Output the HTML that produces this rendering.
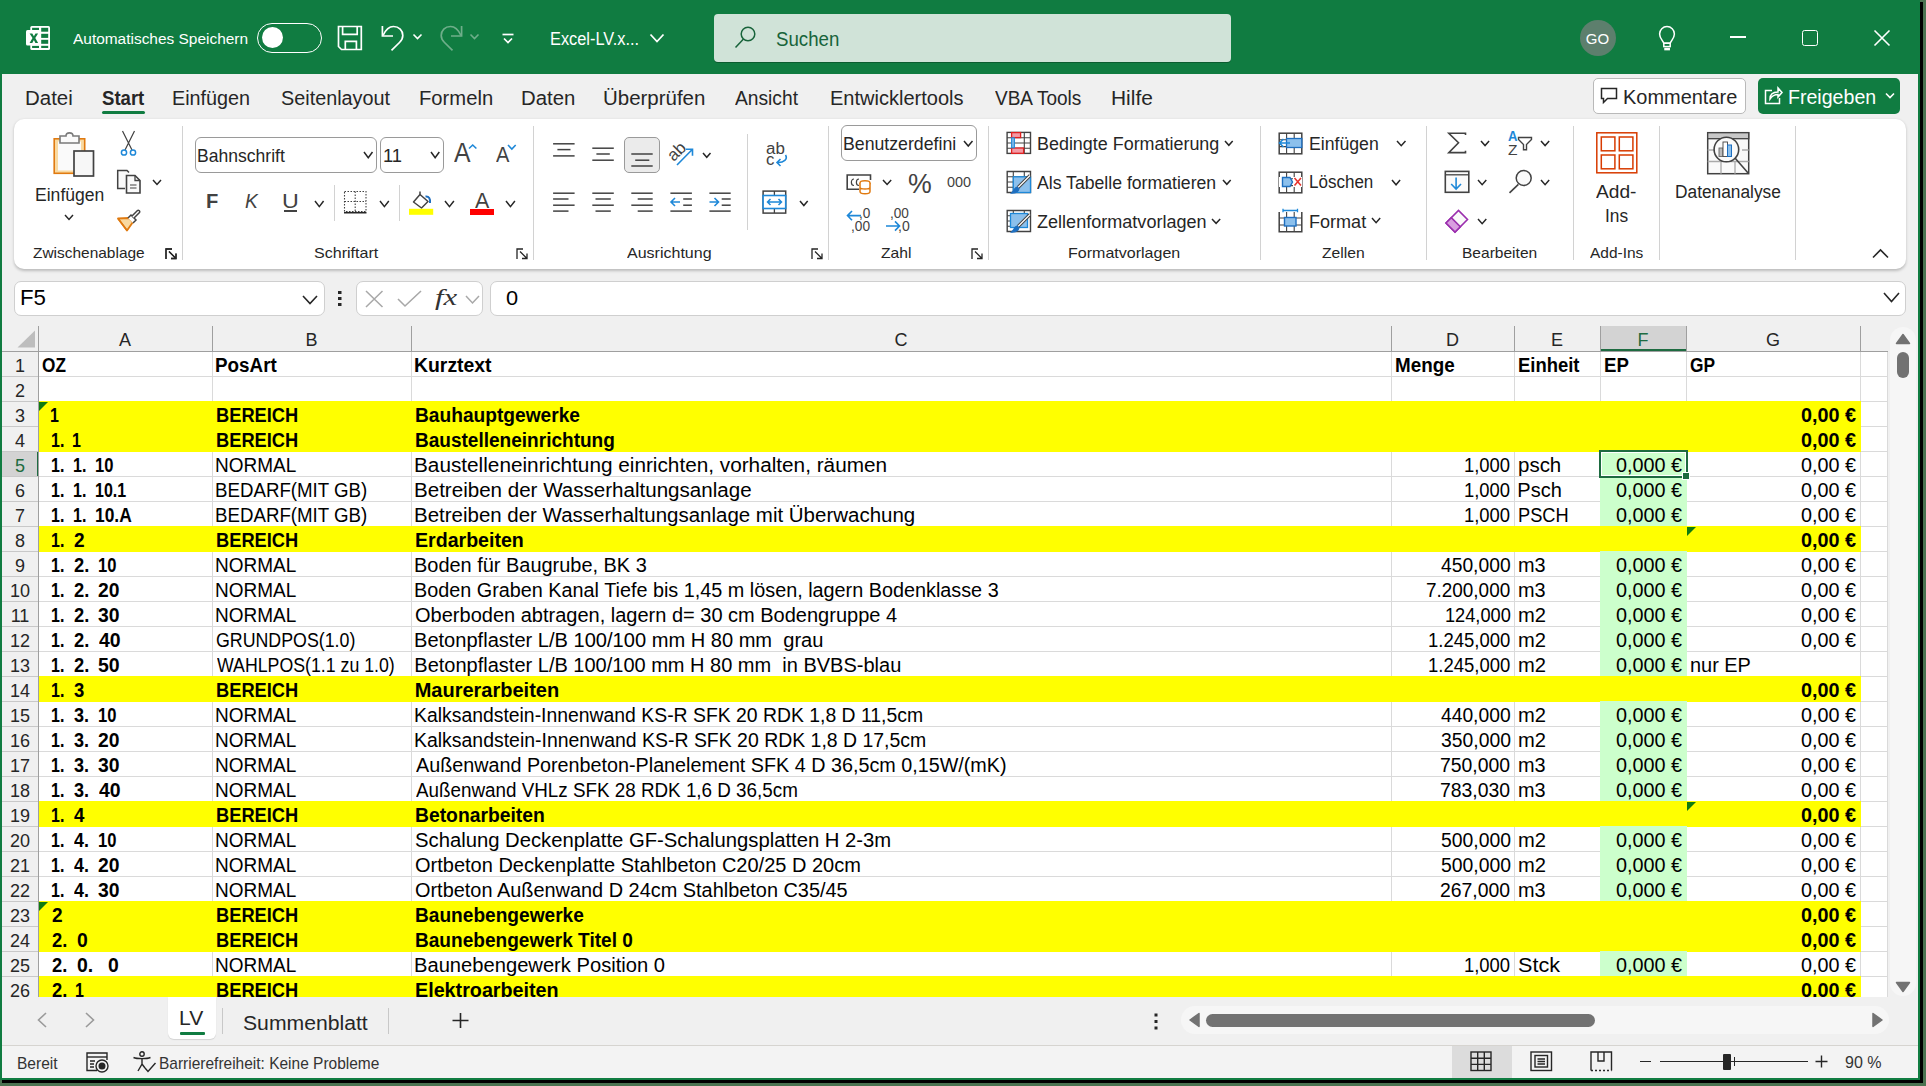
<!DOCTYPE html><html><head><meta charset="utf-8"><title>Excel</title><style>
*{margin:0;padding:0;box-sizing:border-box}
html,body{width:1926px;height:1086px;overflow:hidden;background:#4b7351;font-family:"Liberation Sans",sans-serif}
#w{position:absolute;left:0;top:0;width:1926px;height:1086px;overflow:hidden}
#w span{position:absolute;white-space:pre;transform-origin:0 0}
.r{position:absolute}
svg.r{overflow:visible}
</style></head><body><div id="w">
<div class="r" style="left:2px;top:2px;width:1921px;height:1081px;background:#000"></div>
<div class="r" style="left:0;top:0;width:1920px;height:1080px;background:#107c41"></div>
<div class="r" style="left:2px;top:74px;width:1916px;height:1004px;background:#f0f0f0"></div>
<svg class="r" style="left:20px;top:20px" width="36" height="36" viewBox="0 0 36 36">
<rect x="10.3" y="6" width="19.7" height="24" rx="1.5" fill="#fff"/>
<g fill="#107c41"><rect x="12.1" y="7.8" width="6.9" height="2.2"/><rect x="21.2" y="7.8" width="7" height="3.9"/><rect x="21.2" y="13.8" width="7" height="4.1"/><rect x="21.2" y="19.8" width="7" height="4"/><rect x="21.2" y="25.8" width="7" height="2.2"/><rect x="12.1" y="25.8" width="6.9" height="2.2"/></g>
<rect x="6" y="10.1" width="13.9" height="15.4" rx="1.5" fill="#fff"/>
<path d="M9.6 13.4 H12.3 L13.9 16.3 L15.5 13.4 H18.1 L15.3 17.9 L18.1 22.9 H15.4 L13.9 19.9 L12.3 22.9 H9.6 L12.5 17.9 Z" fill="#107c41"/>
</svg>
<span style="left:73.26px;top:31.00px;font-size:15.5px;line-height:15.5px;font-weight:normal;font-style:normal;color:#ffffff;font-family:'Liberation Sans', sans-serif;transform:scaleX(0.9959);">Automatisches Speichern</span>
<div class="r" style="left:257px;top:23px;width:65px;height:30px;border:1.5px solid #fff;border-radius:15px"></div>
<div class="r" style="left:262px;top:27px;width:21px;height:21px;background:#fff;border-radius:50%"></div>
<svg class="r" style="left:336px;top:24px" width="28" height="28" viewBox="0 0 28 28" fill="none" stroke="#fff" stroke-width="1.7">
<path d="M2.5 2.5 H25.3 V25.5 H5.5 L2.5 22.5 Z"/><path d="M6.6 2.5 V10.3 H21.2 V2.5"/><path d="M9.3 25.5 V17.3 H20.4 V25.5"/></svg>
<svg class="r" style="left:380px;top:24px" width="26" height="28" viewBox="0 0 26 28" fill="none" stroke="#fff" stroke-width="1.7">
<path d="M2.4 2 V12 H13"/><path d="M3 11.5 C6 5 9.5 2.5 13.5 2.5 C19 2.5 22.8 6.5 22.8 11.5 C22.8 14.5 21.5 16.5 19.5 18.5 L11.5 26.3"/></svg>
<svg class="r" style="left:412px;top:33px" width="11" height="8" viewBox="0 0 11 8" fill="none" stroke="#fff" stroke-width="1.6"><path d="M1.5 1.5 L5.5 5.5 L9.5 1.5"/></svg>
<svg class="r" style="left:437.5px;top:24px" width="26" height="28" viewBox="0 0 26 28" fill="none" stroke="#6fae8a" stroke-width="1.7">
<path d="M23.6 2 V12 H13"/><path d="M23 11.5 C20 5 16.5 2.5 12.5 2.5 C7 2.5 3.2 6.5 3.2 11.5 C3.2 14.5 4.5 16.5 6.5 18.5 L14.5 26.3"/></svg>
<svg class="r" style="left:469px;top:33px" width="11" height="8" viewBox="0 0 11 8" fill="none" stroke="#6fae8a" stroke-width="1.6"><path d="M1.5 1.5 L5.5 5.5 L9.5 1.5"/></svg>
<svg class="r" style="left:501px;top:32px" width="14" height="13" viewBox="0 0 14 13" fill="none" stroke="#fff" stroke-width="1.7"><path d="M1.5 2.5 H12.5"/><path d="M3 6.5 L7 10.5 L11 6.5"/></svg>
<span style="left:550.35px;top:30.00px;font-size:18px;line-height:18px;font-weight:normal;font-style:normal;color:#ffffff;font-family:'Liberation Sans', sans-serif;transform:scaleX(0.9089);">Excel-LV.x...</span>
<svg class="r" style="left:649px;top:33px" width="16" height="11" viewBox="0 0 16 11" fill="none" stroke="#fff" stroke-width="1.8"><path d="M1.5 1.5 L8 8.5 L14.5 1.5"/></svg>
<div class="r" style="left:714px;top:14px;width:517px;height:48px;background:#d0e3d8;border-radius:4px;box-shadow:0 1px 0 #0b5c2f"></div>
<svg class="r" style="left:733px;top:24px" width="24" height="26" viewBox="0 0 24 26" fill="none" stroke="#17633a" stroke-width="1.5"><circle cx="15" cy="10" r="6.8"/><path d="M10.5 15 L2.5 23.5"/></svg>
<span style="left:775.96px;top:30.00px;font-size:19.5px;line-height:19.5px;font-weight:normal;font-style:normal;color:#17633a;font-family:'Liberation Sans', sans-serif;transform:scaleX(0.9577);">Suchen</span>
<div class="r" style="left:1580px;top:20px;width:36px;height:36px;border-radius:50%;background:#5d7f6d"></div>
<span style="left:1585.85px;top:31.00px;font-size:15px;line-height:15px;font-weight:normal;font-style:normal;color:#ffffff;font-family:'Liberation Sans', sans-serif;">GO</span>
<svg class="r" style="left:1657px;top:25px" width="20" height="27" viewBox="0 0 20 27" fill="none" stroke="#fff" stroke-width="1.5">
<path d="M6.8 18.2 C5.5 15 2.6 13 2.6 8.9 A7.4 7.4 0 0 1 17.4 8.9 C17.4 13 14.5 15 13.2 18.2 Z"/><rect x="6.8" y="18.2" width="6.4" height="3.4"/><rect x="8" y="23.6" width="4.2" height="1" fill="#fff"/></svg>
<div class="r" style="left:1730px;top:36px;width:16px;height:1.6px;background:#fff"></div>
<div class="r" style="left:1802px;top:30px;width:16px;height:16px;border:1.6px solid #fff;border-radius:2.5px"></div>
<svg class="r" style="left:1873px;top:29px" width="18" height="18" viewBox="0 0 18 18" fill="none" stroke="#fff" stroke-width="1.6"><path d="M1.5 1.5 L16.5 16.5 M16.5 1.5 L1.5 16.5"/></svg>
<span style="left:24.81px;top:89.00px;font-size:19.5px;line-height:19.5px;font-weight:normal;font-style:normal;color:#262626;font-family:'Liberation Sans', sans-serif;transform:scaleX(1.0491);">Datei</span>
<span style="left:101.94px;top:89.00px;font-size:19.5px;line-height:19.5px;font-weight:bold;font-style:normal;color:#262626;font-family:'Liberation Sans', sans-serif;transform:scaleX(0.9522);">Start</span>
<span style="left:172.17px;top:89.00px;font-size:19.5px;line-height:19.5px;font-weight:normal;font-style:normal;color:#262626;font-family:'Liberation Sans', sans-serif;transform:scaleX(1.0142);">Einfügen</span>
<span style="left:280.81px;top:89.00px;font-size:19.5px;line-height:19.5px;font-weight:normal;font-style:normal;color:#262626;font-family:'Liberation Sans', sans-serif;transform:scaleX(1.0158);">Seitenlayout</span>
<span style="left:418.93px;top:89.00px;font-size:19.5px;line-height:19.5px;font-weight:normal;font-style:normal;color:#262626;font-family:'Liberation Sans', sans-serif;transform:scaleX(1.0366);">Formeln</span>
<span style="left:521.02px;top:89.00px;font-size:19.5px;line-height:19.5px;font-weight:normal;font-style:normal;color:#262626;font-family:'Liberation Sans', sans-serif;transform:scaleX(1.0429);">Daten</span>
<span style="left:602.91px;top:89.00px;font-size:19.5px;line-height:19.5px;font-weight:normal;font-style:normal;color:#262626;font-family:'Liberation Sans', sans-serif;transform:scaleX(1.0494);">Überprüfen</span>
<span style="left:735.25px;top:89.00px;font-size:19.5px;line-height:19.5px;font-weight:normal;font-style:normal;color:#262626;font-family:'Liberation Sans', sans-serif;transform:scaleX(0.9849);">Ansicht</span>
<span style="left:829.95px;top:89.00px;font-size:19.5px;line-height:19.5px;font-weight:normal;font-style:normal;color:#262626;font-family:'Liberation Sans', sans-serif;transform:scaleX(1.0268);">Entwicklertools</span>
<span style="left:995.40px;top:89.00px;font-size:19.5px;line-height:19.5px;font-weight:normal;font-style:normal;color:#262626;font-family:'Liberation Sans', sans-serif;transform:scaleX(0.9744);">VBA Tools</span>
<span style="left:1110.88px;top:89.00px;font-size:19.5px;line-height:19.5px;font-weight:normal;font-style:normal;color:#262626;font-family:'Liberation Sans', sans-serif;transform:scaleX(1.0721);">Hilfe</span>
<div class="r" style="left:102px;top:111px;width:43px;height:3px;border-radius:1.5px;background:#107c41"></div>
<div class="r" style="left:1593px;top:78px;width:153px;height:36px;background:#fff;border:1px solid #b9b9b9;border-radius:5px"></div>
<svg class="r" style="left:1600px;top:87px" width="19" height="18" viewBox="0 0 19 18" fill="none" stroke="#262626" stroke-width="1.5"><path d="M1.5 1.5 H16.5 V11.5 H7.5 L3.5 15.5 V11.5 H1.5 Z"/></svg>
<span style="left:1623.15px;top:88.00px;font-size:19.5px;line-height:19.5px;font-weight:normal;font-style:normal;color:#262626;font-family:'Liberation Sans', sans-serif;transform:scaleX(1.0234);">Kommentare</span>
<div class="r" style="left:1758px;top:78px;width:142px;height:36px;background:#107c41;border-radius:5px"></div>
<svg class="r" style="left:1764px;top:86px" width="19" height="19" viewBox="0 0 19 19" fill="none" stroke="#fff" stroke-width="1.5"><path d="M8 4.5 H1.5 V17.5 H15.5 V12"/><path d="M6 13 C6 8 9.5 6 14 6 V2 L18 6.5 L14 11 V8.5 C10.5 8.5 8 10 6 13 Z"/></svg>
<span style="left:1788.39px;top:88.00px;font-size:19.5px;line-height:19.5px;font-weight:normal;font-style:normal;color:#ffffff;font-family:'Liberation Sans', sans-serif;transform:scaleX(1.0039);">Freigeben</span>
<svg class="r" style="left:1885px;top:92px" width="10" height="8" viewBox="0 0 10 8" fill="none" stroke="#fff" stroke-width="1.6"><path d="M1 1.5 L5 5.5 L9 1.5"/></svg>
<div class="r" style="left:14px;top:281px;width:311px;height:35px;background:#fff;border:1px solid #cfcfcf;border-radius:7px"></div>
<span style="left:20.16px;top:286.00px;font-size:22.8px;line-height:22.8px;font-weight:normal;font-style:normal;color:#000;font-family:'Liberation Sans', sans-serif;transform:scaleX(0.9761);">F5</span>
<svg class="r" style="left:302px;top:295px" width="16" height="10" viewBox="0 0 16 10" fill="none" stroke="#262626" stroke-width="1.6"><path d="M1 1 L8 8.5 L15 1"/></svg>
<svg class="r" style="left:337px;top:290px" width="6" height="17" viewBox="0 0 6 17" fill="#262626"><rect x="1" y="1" width="3.5" height="3"/><rect x="1" y="7" width="3.5" height="3"/><rect x="1" y="13" width="3.5" height="3"/></svg>
<div class="r" style="left:355.5px;top:281px;width:127px;height:35px;background:#fff;border:1px solid #cfcfcf;border-radius:7px"></div>
<svg class="r" style="left:365px;top:290px" width="19" height="18" viewBox="0 0 19 18" fill="none" stroke="#a8a8a8" stroke-width="1.5"><path d="M1 1 L17.5 17 M17.5 1 L1 17"/></svg>
<svg class="r" style="left:397px;top:290px" width="26" height="17" viewBox="0 0 26 17" fill="none" stroke="#a8a8a8" stroke-width="1.6"><path d="M1 9 L8 16 L24 1"/></svg>
<span style="left:434.89px;top:286.00px;font-size:23px;line-height:23px;font-weight:normal;font-style:italic;color:#333;font-family:'Liberation Serif', serif;transform:scaleX(1.3321);">fx</span>
<svg class="r" style="left:465px;top:295px" width="15" height="9" viewBox="0 0 15 9" fill="none" stroke="#a8a8a8" stroke-width="1.5"><path d="M1 1 L7.5 8 L14 1"/></svg>
<div class="r" style="left:489.5px;top:281px;width:1416px;height:35px;background:#fff;border:1px solid #cfcfcf;border-radius:7px"></div>
<span style="left:505.83px;top:288.00px;font-size:20px;line-height:20px;font-weight:normal;font-style:normal;color:#000;font-family:'Liberation Sans', sans-serif;transform:scaleX(1.0890);">0</span>
<svg class="r" style="left:1883px;top:292px" width="17" height="11" viewBox="0 0 17 11" fill="none" stroke="#262626" stroke-width="1.6"><path d="M1 1 L8.5 9.5 L16 1"/></svg>
<div class="r" style="left:14px;top:118.5px;width:1892px;height:150.5px;background:#fff;border-radius:10px;box-shadow:0 1.5px 3px rgba(0,0,0,0.22)"></div>
<div class="r" style="left:182px;top:126px;width:1px;height:134px;background:#d2d2d2"></div>
<div class="r" style="left:533px;top:126px;width:1px;height:134px;background:#d2d2d2"></div>
<div class="r" style="left:828px;top:126px;width:1px;height:134px;background:#d2d2d2"></div>
<div class="r" style="left:988px;top:126px;width:1px;height:134px;background:#d2d2d2"></div>
<div class="r" style="left:1260px;top:126px;width:1px;height:134px;background:#d2d2d2"></div>
<div class="r" style="left:1426px;top:126px;width:1px;height:134px;background:#d2d2d2"></div>
<div class="r" style="left:1573px;top:126px;width:1px;height:134px;background:#d2d2d2"></div>
<div class="r" style="left:1659px;top:126px;width:1px;height:134px;background:#d2d2d2"></div>
<div class="r" style="left:1795px;top:126px;width:1px;height:134px;background:#d2d2d2"></div>
<div class="r" style="left:334px;top:185px;width:1px;height:36px;background:#d2d2d2"></div>
<div class="r" style="left:399px;top:185px;width:1px;height:36px;background:#d2d2d2"></div>
<div class="r" style="left:747px;top:134px;width:1px;height:96px;background:#d2d2d2"></div>
<span style="left:32.90px;top:245.00px;font-size:15px;line-height:15px;font-weight:normal;font-style:normal;color:#262626;font-family:'Liberation Sans', sans-serif;transform:scaleX(1.0303);">Zwischenablage</span>
<span style="left:313.78px;top:245.00px;font-size:15px;line-height:15px;font-weight:normal;font-style:normal;color:#262626;font-family:'Liberation Sans', sans-serif;transform:scaleX(1.0707);">Schriftart</span>
<span style="left:627.06px;top:245.00px;font-size:15px;line-height:15px;font-weight:normal;font-style:normal;color:#262626;font-family:'Liberation Sans', sans-serif;transform:scaleX(1.0674);">Ausrichtung</span>
<span style="left:880.89px;top:245.00px;font-size:15px;line-height:15px;font-weight:normal;font-style:normal;color:#262626;font-family:'Liberation Sans', sans-serif;transform:scaleX(1.0407);">Zahl</span>
<span style="left:1068.08px;top:245.00px;font-size:15px;line-height:15px;font-weight:normal;font-style:normal;color:#262626;font-family:'Liberation Sans', sans-serif;transform:scaleX(1.0684);">Formatvorlagen</span>
<span style="left:1321.69px;top:245.00px;font-size:15px;line-height:15px;font-weight:normal;font-style:normal;color:#262626;font-family:'Liberation Sans', sans-serif;transform:scaleX(1.0454);">Zellen</span>
<span style="left:1462.22px;top:245.00px;font-size:15px;line-height:15px;font-weight:normal;font-style:normal;color:#262626;font-family:'Liberation Sans', sans-serif;transform:scaleX(1.0362);">Bearbeiten</span>
<span style="left:1589.66px;top:245.00px;font-size:15px;line-height:15px;font-weight:normal;font-style:normal;color:#262626;font-family:'Liberation Sans', sans-serif;transform:scaleX(1.0323);">Add-Ins</span>
<svg class="r" style="left:165px;top:248px" width="13" height="12" viewBox="0 0 13 12" ><path d="M1 11 V1 H7" fill="none" stroke="#262626" stroke-width="1.3"/><path d="M4 3.5 L11 10.5 M11 5.5 V10.5 H6" fill="none" stroke="#262626" stroke-width="1.3"/></svg>
<svg class="r" style="left:516px;top:248px" width="13" height="12" viewBox="0 0 13 12" ><path d="M1 11 V1 H7" fill="none" stroke="#262626" stroke-width="1.3"/><path d="M4 3.5 L11 10.5 M11 5.5 V10.5 H6" fill="none" stroke="#262626" stroke-width="1.3"/></svg>
<svg class="r" style="left:811px;top:248px" width="13" height="12" viewBox="0 0 13 12" ><path d="M1 11 V1 H7" fill="none" stroke="#262626" stroke-width="1.3"/><path d="M4 3.5 L11 10.5 M11 5.5 V10.5 H6" fill="none" stroke="#262626" stroke-width="1.3"/></svg>
<svg class="r" style="left:971px;top:248px" width="13" height="12" viewBox="0 0 13 12" ><path d="M1 11 V1 H7" fill="none" stroke="#262626" stroke-width="1.3"/><path d="M4 3.5 L11 10.5 M11 5.5 V10.5 H6" fill="none" stroke="#262626" stroke-width="1.3"/></svg>
<svg class="r" style="left:1872.0px;top:248.5px" width="17.0" height="9.5" viewBox="0 0 17.00 9.50" fill="none" stroke="#262626" stroke-width="1.6"><path d="M1 8.50 L8.50 1 L16.00 8.50"/></svg>
<svg class="r" style="left:52px;top:131px" width="44" height="47" viewBox="0 0 44 47" >
<rect x="2.2" y="7.8" width="30.5" height="34.5" fill="#f9d9a0" stroke="#e07a10" stroke-width="1.6"/>
<rect x="6" y="10.5" width="23" height="29" fill="#fafafa"/>
<path d="M8 5 H14 C14 0.8 21 0.8 21 5 H27 V12 H8 Z" fill="#fafafa" stroke="#7a7a7a" stroke-width="1.6"/>
<rect x="22" y="20" width="19.5" height="25" fill="#f7f7f7" stroke="#424242" stroke-width="1.7"/></svg>
<span style="left:34.85px;top:186.00px;font-size:18px;line-height:18px;font-weight:normal;font-style:normal;color:#262626;font-family:'Liberation Sans', sans-serif;transform:scaleX(0.9760);">Einfügen</span>
<svg class="r" style="left:64.4px;top:214.1px" width="10.0" height="6.4" viewBox="0 0 10.00 6.40" fill="none" stroke="#262626" stroke-width="1.5"><path d="M1 1 L5.00 5.40 L9.00 1"/></svg>
<svg class="r" style="left:120px;top:130px" width="18" height="27" viewBox="0 0 18 27" >
<path d="M2.5 1 L12 20 M14.5 1 L5 20" fill="none" stroke="#424242" stroke-width="1.2"/>
<circle cx="4" cy="22.5" r="2.6" fill="#fff" stroke="#1e88d8" stroke-width="1.5"/><circle cx="13" cy="22.5" r="2.6" fill="#fff" stroke="#1e88d8" stroke-width="1.5"/></svg>
<svg class="r" style="left:116px;top:169px" width="27" height="26" viewBox="0 0 27 26" >
<path d="M9 19.5 H1.7 V1.5 H11 L13 3.5" fill="#fafafa" stroke="#424242" stroke-width="1.5"/>
<path d="M10.5 6.5 H19 L24 11.5 V24 H10.5 Z" fill="#fafafa" stroke="#424242" stroke-width="1.6"/>
<path d="M19 6.5 V11.5 H24" fill="none" stroke="#424242" stroke-width="1.3"/>
<path d="M14 16 H20.5 M14 19 H20.5" stroke="#424242" stroke-width="1.2"/></svg>
<svg class="r" style="left:152.3px;top:179.4px" width="10.0" height="6.4" viewBox="0 0 10.00 6.40" fill="none" stroke="#262626" stroke-width="1.5"><path d="M1 1 L5.00 5.40 L9.00 1"/></svg>
<svg class="r" style="left:116px;top:208px" width="27" height="25" viewBox="0 0 27 25" >
<path d="M2 10.5 L13 10 L17 14 L11 22.5 Z" fill="#f9d9a0" stroke="#e07a10" stroke-width="1.8" stroke-linejoin="round"/>
<path d="M2 10.5 L11 22.5" stroke="#e07a10" stroke-width="1.4"/>
<path d="M12 10 L15 7 L20 12 L17 15" fill="#fff" stroke="#424242" stroke-width="1.5"/>
<path d="M16 8 L21.5 2.5 C22.5 1.5 24.5 3.5 23.5 4.5 L18 10" fill="#fff" stroke="#424242" stroke-width="1.5"/></svg>
<svg class="r" style="left:165px;top:248px" width="13" height="12" viewBox="0 0 13 12" ><path d="M1 11 V1 H7" fill="none" stroke="#262626" stroke-width="1.3"/><path d="M4 3.5 L11 10.5 M11 5.5 V10.5 H6" fill="none" stroke="#262626" stroke-width="1.3"/></svg>
<div class="r" style="left:195.3px;top:137.4px;width:181.3px;height:35.3px;border:1px solid #9a9a9a;border-radius:6px;background:#fff"></div>
<span style="left:197.35px;top:146.00px;font-size:19px;line-height:19px;font-weight:normal;font-style:normal;color:#262626;font-family:'Liberation Sans', sans-serif;transform:scaleX(0.9235);">Bahnschrift</span>
<svg class="r" style="left:362.9px;top:151.4px" width="10.5" height="7.8" viewBox="0 0 10.50 7.80" fill="none" stroke="#262626" stroke-width="1.5"><path d="M1 1 L5.25 6.80 L9.50 1"/></svg>
<div class="r" style="left:380.3px;top:137.4px;width:63.4px;height:35.3px;border:1px solid #9a9a9a;border-radius:6px;background:#fff"></div>
<span style="left:382.82px;top:146.00px;font-size:19px;line-height:19px;font-weight:normal;font-style:normal;color:#262626;font-family:'Liberation Sans', sans-serif;transform:scaleX(0.9664);">11</span>
<svg class="r" style="left:430.0px;top:151.4px" width="10.3" height="7.8" viewBox="0 0 10.30 7.80" fill="none" stroke="#262626" stroke-width="1.5"><path d="M1 1 L5.15 6.80 L9.30 1"/></svg>
<span style="left:454.24px;top:140.00px;font-size:27px;line-height:27px;font-weight:normal;font-style:normal;color:#424242;font-family:'Liberation Sans', sans-serif;transform:scaleX(0.9168);">A</span>
<svg class="r" style="left:468.4px;top:143.8px" width="9.4" height="5.5" viewBox="0 0 9.40 5.50" fill="none" stroke="#1e88d8" stroke-width="1.6"><path d="M1 4.50 L4.70 1 L8.40 4.50"/></svg>
<span style="left:495.85px;top:144.00px;font-size:22px;line-height:22px;font-weight:normal;font-style:normal;color:#424242;font-family:'Liberation Sans', sans-serif;transform:scaleX(0.9125);">A</span>
<svg class="r" style="left:507.3px;top:143.8px" width="9.7" height="6.0" viewBox="0 0 9.70 6.00" fill="none" stroke="#1e88d8" stroke-width="1.6"><path d="M1 1 L4.85 5.00 L8.70 1"/></svg>
<span style="left:206.34px;top:191.00px;font-size:20px;line-height:20px;font-weight:bold;font-style:normal;color:#424242;font-family:'Liberation Sans', sans-serif;transform:scaleX(1.0049);">F</span>
<span style="left:245.02px;top:191.00px;font-size:20px;line-height:20px;font-weight:normal;font-style:italic;color:#424242;font-family:'Liberation Sans', sans-serif;transform:scaleX(0.9591);">K</span>
<span style="left:281.80px;top:191.00px;font-size:20px;line-height:20px;font-weight:normal;font-style:normal;color:#424242;font-family:'Liberation Sans', sans-serif;transform:scaleX(1.1630);">U</span>
<div class="r" style="left:283.6px;top:210.4px;width:13.2px;height:1.5px;background:#424242"></div>
<svg class="r" style="left:314.0px;top:199.6px" width="10.6" height="7.6" viewBox="0 0 10.60 7.60" fill="none" stroke="#262626" stroke-width="1.5"><path d="M1 1 L5.30 6.60 L9.60 1"/></svg>
<svg class="r" style="left:343px;top:190px" width="25" height="25" viewBox="0 0 25 25" ><rect x="1.5" y="1.5" width="21.5" height="20" fill="none" stroke="#424242" stroke-width="1.1" stroke-dasharray="1.5 1.5"/><path d="M12.2 1.5 V21.5 M1.5 11.5 H23" stroke="#424242" stroke-width="1.1" stroke-dasharray="1.5 1.5"/><path d="M1 22.7 H23.5" stroke="#262626" stroke-width="1.6"/></svg>
<svg class="r" style="left:378.8px;top:199.6px" width="10.8" height="7.6" viewBox="0 0 10.80 7.60" fill="none" stroke="#262626" stroke-width="1.5"><path d="M1 1 L5.40 6.60 L9.80 1"/></svg>
<svg class="r" style="left:408px;top:190px" width="27" height="26" viewBox="0 0 27 26" ><path d="M5.5 12 L12 4.5 L20 11.5 L13.5 18 Z" fill="#fff" stroke="#424242" stroke-width="1.5" stroke-linejoin="round"/><path d="M12 4.5 V1.5" stroke="#424242" stroke-width="1.5"/><path d="M17.5 6.5 C21 6 22.5 9 22 13" fill="none" stroke="#1e6fc0" stroke-width="2"/><rect x="1" y="18.8" width="24.2" height="6" fill="#ffff00"/></svg>
<svg class="r" style="left:443.5px;top:199.6px" width="10.9" height="7.6" viewBox="0 0 10.90 7.60" fill="none" stroke="#262626" stroke-width="1.5"><path d="M1 1 L5.45 6.60 L9.90 1"/></svg>
<span style="left:474.95px;top:190.00px;font-size:22px;line-height:22px;font-weight:normal;font-style:normal;color:#424242;font-family:'Liberation Sans', sans-serif;transform:scaleX(0.9743);">A</span>
<div class="r" style="left:469.8px;top:208.8px;width:24.2px;height:6px;background:#ff0000"></div>
<svg class="r" style="left:504.6px;top:199.6px" width="10.9" height="7.6" viewBox="0 0 10.90 7.60" fill="none" stroke="#262626" stroke-width="1.5"><path d="M1 1 L5.45 6.60 L9.90 1"/></svg>
<div class="r" style="left:624px;top:137px;width:36px;height:36px;background:#ebebeb;border:1px solid #9a9a9a;border-radius:5px"></div>
<svg class="r" style="left:0;top:0" width="1" height="1" fill="none" stroke="#424242" stroke-width="1.5"><path d="M553.1 143.8 H574.6"/><path d="M557.4 149.6 H570.5"/><path d="M553.1 155.9 H574.6"/><path d="M592.3 148.2 H613.8"/><path d="M596.4 154 H609.8"/><path d="M592.3 160.2 H613.8"/><path d="M631.3 154 H652.7"/><path d="M635.2 160.2 H649.3"/><path d="M631.3 166 H652.7"/><path d="M553.1 193.2 H574.6"/><path d="M553.1 199 H568.5"/><path d="M553.1 205.2 H574.6"/><path d="M553.1 211.1 H568.5"/><path d="M592.3 193.2 H613.8"/><path d="M595.5 199 H610.8"/><path d="M592.3 205.2 H613.8"/><path d="M595.5 211.1 H610.8"/><path d="M631.3 193.2 H652.7"/><path d="M637.7 199 H652.7"/><path d="M631.3 205.2 H652.7"/><path d="M637.7 211.1 H652.7"/><path d="M670.4 193.2 H691.9"/><path d="M683.2 199 H691.9"/><path d="M683.2 205.2 H691.9"/><path d="M670.4 211.1 H691.9"/><path d="M709.4 193.2 H730.7"/><path d="M721.7 199 H730.7"/><path d="M721.7 205.2 H730.7"/><path d="M709.4 211.1 H730.7"/></svg>
<svg class="r" style="left:0;top:0" width="1" height="1" fill="none" stroke="#1e88d8" stroke-width="1.6"><path d="M671 202 H680 M675 198 L671 202 L675 206"/><path d="M709.5 202 H718.5 M714.5 198 L718.5 202 L714.5 206"/></svg>
<span style="left:664px;top:141.5px;width:25px;height:19px;text-align:center;font-size:17px;line-height:19px;color:#424242;transform:rotate(-45deg);transform-origin:50% 50%">ab</span>
<svg class="r" style="left:0;top:0" width="1" height="1" fill="none" stroke="#1e88d8" stroke-width="1.6"><path d="M677 165 L692.5 149.2 M686 149.2 H692.5 V155.7"/></svg>
<svg class="r" style="left:701.5px;top:152.3px" width="9.5" height="6.3" viewBox="0 0 9.50 6.30" fill="none" stroke="#262626" stroke-width="1.5"><path d="M1 1 L4.75 5.30 L8.50 1"/></svg>
<span style="left:766.08px;top:141.00px;font-size:16px;line-height:16px;font-weight:normal;font-style:normal;color:#424242;font-family:'Liberation Sans', sans-serif;transform:scaleX(1.0584);">ab</span>
<span style="left:766.09px;top:152.00px;font-size:16px;line-height:16px;font-weight:normal;font-style:normal;color:#424242;font-family:'Liberation Sans', sans-serif;transform:scaleX(1.0465);">c</span>
<svg class="r" style="left:0;top:0" width="1" height="1" fill="none" stroke="#1e88d8" stroke-width="1.6"><path d="M785.5 155 C788 159 784 163 777 162.5 M780.5 159 L777 162.5 L780.5 166"/></svg>
<svg class="r" style="left:762px;top:190px" width="26" height="25" viewBox="0 0 26 25" ><rect x="1.1" y="1.1" width="22.6" height="22" fill="#fff" stroke="#424242" stroke-width="1.5"/><path d="M12.4 1 V5.5 M12.4 18.5 V23" stroke="#424242" stroke-width="1.3"/><rect x="1.1" y="5.5" width="22.6" height="13" fill="#fff" stroke="#1e88d8" stroke-width="1.6"/><path d="M5.5 12 H19.5 M8.5 9 L5.5 12 L8.5 15 M16.5 9 L19.5 12 L16.5 15" fill="none" stroke="#1e88d8" stroke-width="1.5"/></svg>
<svg class="r" style="left:798.5px;top:200.0px" width="9.7" height="6.6" viewBox="0 0 9.70 6.60" fill="none" stroke="#262626" stroke-width="1.5"><path d="M1 1 L4.85 5.60 L8.70 1"/></svg>
<div class="r" style="left:841px;top:125px;width:135.7px;height:35.7px;border:1px solid #9a9a9a;border-radius:6px;background:#fff"></div>
<span style="left:843.44px;top:135.00px;font-size:18.5px;line-height:18.5px;font-weight:normal;font-style:normal;color:#262626;font-family:'Liberation Sans', sans-serif;transform:scaleX(0.9568);">Benutzerdefini</span>
<svg class="r" style="left:963.0px;top:140.0px" width="10.5" height="7.0" viewBox="0 0 10.50 7.00" fill="none" stroke="#262626" stroke-width="1.5"><path d="M1 1 L5.25 6.00 L9.50 1"/></svg>
<svg class="r" style="left:846px;top:174px" width="27" height="21" viewBox="0 0 27 21" ><path d="M13 15.2 H1.2 V1 H24.5 V6" fill="none" stroke="#424242" stroke-width="1.6"/><path d="M8 5 C4.5 5 4.5 11.5 8 11.5 M13 5 C9.5 5 9.5 11.5 13 11.5" fill="none" stroke="#424242" stroke-width="1.2"/><ellipse cx="19" cy="9" rx="5" ry="2.2" fill="#fff" stroke="#e07a10" stroke-width="1.5"/><path d="M14 9 V17.5 C14 20.5 24 20.5 24 17.5 V9 M14 13.2 C14 15.5 24 15.5 24 13.2" fill="#fff" stroke="#e07a10" stroke-width="1.5"/></svg>
<svg class="r" style="left:882.1px;top:179.2px" width="10.2" height="6.4" viewBox="0 0 10.20 6.40" fill="none" stroke="#262626" stroke-width="1.5"><path d="M1 1 L5.10 5.40 L9.20 1"/></svg>
<span style="left:908.07px;top:171.00px;font-size:27px;line-height:27px;font-weight:normal;font-style:normal;color:#424242;font-family:'Liberation Sans', sans-serif;transform:scaleX(0.9892);">%</span>
<span style="left:946.52px;top:174.00px;font-size:15.5px;line-height:15.5px;font-weight:normal;font-style:normal;color:#424242;font-family:'Liberation Sans', sans-serif;transform:scaleX(0.9292);">000</span>
<span style="left:858.97px;top:206.00px;font-size:14px;line-height:14px;font-weight:normal;font-style:normal;color:#424242;font-family:'Liberation Sans', sans-serif;transform:scaleX(0.9726);">,0</span>
<span style="left:851.27px;top:219.00px;font-size:14px;line-height:14px;font-weight:normal;font-style:normal;color:#424242;font-family:'Liberation Sans', sans-serif;transform:scaleX(0.9788);">,00</span>
<span style="left:890.37px;top:206.00px;font-size:14px;line-height:14px;font-weight:normal;font-style:normal;color:#424242;font-family:'Liberation Sans', sans-serif;transform:scaleX(0.9731);">,00</span>
<span style="left:897.64px;top:219.00px;font-size:14px;line-height:14px;font-weight:normal;font-style:normal;color:#424242;font-family:'Liberation Sans', sans-serif;transform:scaleX(1.0030);">,0</span>
<svg class="r" style="left:0;top:0" width="1" height="1" fill="none" stroke="#1e88d8" stroke-width="1.6"><path d="M847.5 215.6 H861 M852 211 L847.5 215.6 L852 220.2"/><path d="M886 226 H899.5 M895 221.4 L899.5 226 L895 230.6"/></svg>
<svg class="r" style="left:1006px;top:131px" width="26" height="24" viewBox="0 0 26 24" ><rect x="1.1" y="1.4" width="23.4" height="21" fill="#fff" stroke="#424242" stroke-width="1.4"/><path d="M7.3 1.4 V22.4 M18.3 1.4 V22.4 M1.1 6.7 H24.5 M1.1 12 H24.5 M1.1 17.2 H24.5" stroke="#424242" stroke-width="1.1"/><rect x="5.6" y="1.6" width="9" height="5" fill="#f39ba6" stroke="#e02020" stroke-width="1.3"/><rect x="5.6" y="17" width="12" height="5.3" fill="#f39ba6" stroke="#e02020" stroke-width="1.3"/><rect x="5.6" y="6.8" width="2.8" height="10" fill="#7fb6e6" stroke="#1e88d8" stroke-width="1"/></svg>
<span style="left:1036.52px;top:135.00px;font-size:18.7px;line-height:18.7px;font-weight:normal;font-style:normal;color:#262626;font-family:'Liberation Sans', sans-serif;transform:scaleX(0.9589);">Bedingte Formatierung</span>
<svg class="r" style="left:1224.3px;top:139.5px" width="9.7" height="6.3" viewBox="0 0 9.70 6.30" fill="none" stroke="#262626" stroke-width="1.5"><path d="M1 1 L4.85 5.30 L8.70 1"/></svg>
<svg class="r" style="left:1006px;top:170px" width="26" height="25" viewBox="0 0 26 25" ><path d="M1.2 22.5 V1.5 H24.5 V22.5 Z" fill="#fff" stroke="#424242" stroke-width="1.4"/><path d="M7.3 1.5 V22.5 M18.3 1.5 V22.5 M1.2 6.8 H24.5 M1.2 12 H24.5 M1.2 17.3 H24.5" stroke="#424242" stroke-width="1.1"/><rect x="7.3" y="6.8" width="17.2" height="15.7" fill="#8cc0ec" stroke="#1e88d8" stroke-width="1.3"/><path d="M24 5.5 L12 17.5" stroke="#424242" stroke-width="3.2"/><path d="M24 5.5 L12 17.5" stroke="#fff" stroke-width="1.2"/><path d="M11.5 16.5 C8 16.5 8 21 4 23.5 C9 24.5 13.5 22 13.5 18.5 Z" fill="#1e6fc0"/></svg>
<span style="left:1037.36px;top:174.00px;font-size:18.7px;line-height:18.7px;font-weight:normal;font-style:normal;color:#262626;font-family:'Liberation Sans', sans-serif;transform:scaleX(0.9441);">Als Tabelle formatieren</span>
<svg class="r" style="left:1221.5px;top:178.5px" width="9.7" height="6.3" viewBox="0 0 9.70 6.30" fill="none" stroke="#262626" stroke-width="1.5"><path d="M1 1 L4.85 5.30 L8.70 1"/></svg>
<svg class="r" style="left:1006px;top:209px" width="26" height="25" viewBox="0 0 26 25" ><path d="M1.2 22.5 V1.5 H24.5 V22.5 Z" fill="#fff" stroke="#424242" stroke-width="1.4"/><path d="M7.3 1.5 V6.8 M18.3 1.5 V6.8 M1.2 6.8 H24.5 M1.2 12 H5 M1.2 17.3 H5" stroke="#424242" stroke-width="1.1"/><rect x="4.5" y="4.5" width="17" height="14" fill="#8cc0ec" stroke="#1e88d8" stroke-width="1.3"/><path d="M24 5.5 L12 17.5" stroke="#424242" stroke-width="3.2"/><path d="M24 5.5 L12 17.5" stroke="#fff" stroke-width="1.2"/><path d="M11.5 16.5 C8 16.5 8 21 4 23.5 C9 24.5 13.5 22 13.5 18.5 Z" fill="#1e6fc0"/></svg>
<span style="left:1036.81px;top:213.00px;font-size:18.7px;line-height:18.7px;font-weight:normal;font-style:normal;color:#262626;font-family:'Liberation Sans', sans-serif;transform:scaleX(0.9663);">Zellenformatvorlagen</span>
<svg class="r" style="left:1211.4px;top:217.5px" width="10.2" height="6.3" viewBox="0 0 10.20 6.30" fill="none" stroke="#262626" stroke-width="1.5"><path d="M1 1 L5.10 5.30 L9.20 1"/></svg>
<svg class="r" style="left:1278px;top:131.5px" width="26" height="24" viewBox="0 0 26 24" ><rect x="1.2" y="1.2" width="22.6" height="20.6" fill="#fff" stroke="#424242" stroke-width="1.5"/><path d="M8.6 1.2 V21.8 M16.2 1.2 V21.8 M1.2 7.7 H23.8 M1.2 14.6 H23.8" stroke="#424242" stroke-width="1.1"/><rect x="8.5" y="6.5" width="15.3" height="9" fill="#8cc0ec" stroke="#1e6fc0" stroke-width="1.3"/><path d="M1.5 11 H12 M5.5 7 L1.5 11 L5.5 15" fill="none" stroke="#1e88d8" stroke-width="1.6"/></svg>
<span style="left:1308.74px;top:135.00px;font-size:18.7px;line-height:18.7px;font-weight:normal;font-style:normal;color:#262626;font-family:'Liberation Sans', sans-serif;transform:scaleX(0.9451);">Einfügen</span>
<svg class="r" style="left:1396.0px;top:139.9px" width="10.5" height="6.7" viewBox="0 0 10.50 6.70" fill="none" stroke="#262626" stroke-width="1.5"><path d="M1 1 L5.25 5.70 L9.50 1"/></svg>
<svg class="r" style="left:1278px;top:170.5px" width="26" height="24" viewBox="0 0 26 24" ><rect x="1.2" y="1.2" width="22.6" height="20.6" fill="#fff" stroke="#424242" stroke-width="1.5"/><path d="M8.6 1.2 V21.8 M16.2 1.2 V21.8 M1.2 7.7 H23.8 M1.2 14.6 H23.8" stroke="#424242" stroke-width="1.1"/><rect x="15" y="6" width="9" height="10" fill="#fff"/><rect x="1" y="6" width="3.5" height="10" fill="#fff"/><path d="M4.5 6.5 H12 L14.5 11 L12 15.5 H4.5 Z" fill="#8cc0ec" stroke="#1e6fc0" stroke-width="1.4"/><path d="M16.5 7 L23 14.5 M23 7 L16.5 14.5" stroke="#e8332c" stroke-width="1.6"/></svg>
<span style="left:1308.80px;top:173.00px;font-size:18.7px;line-height:18.7px;font-weight:normal;font-style:normal;color:#262626;font-family:'Liberation Sans', sans-serif;transform:scaleX(0.9106);">Löschen</span>
<svg class="r" style="left:1391.3px;top:179.0px" width="10.1" height="6.8" viewBox="0 0 10.10 6.80" fill="none" stroke="#262626" stroke-width="1.5"><path d="M1 1 L5.05 5.80 L9.10 1"/></svg>
<svg class="r" style="left:1278px;top:208px" width="26" height="26" viewBox="0 0 26 26" ><path d="M1.2 4 V23.8 H23.8 V4" fill="#fff" stroke="#424242" stroke-width="1.5"/><path d="M8.6 4 V23.8 M16.2 4 V23.8 M1.2 10 H23.8 M1.2 17 H23.8" stroke="#424242" stroke-width="1.1"/><rect x="6.5" y="9.5" width="11.5" height="8.5" fill="#8cc0ec" stroke="#1e6fc0" stroke-width="1.4"/><path d="M5 2.5 H19.5 M5 0.8 V4.3 M19.5 0.8 V4.3" stroke="#1e88d8" stroke-width="1.3"/></svg>
<span style="left:1308.71px;top:213.00px;font-size:18.7px;line-height:18.7px;font-weight:normal;font-style:normal;color:#262626;font-family:'Liberation Sans', sans-serif;transform:scaleX(0.9661);">Format</span>
<svg class="r" style="left:1371.1px;top:217.2px" width="10.2" height="6.7" viewBox="0 0 10.20 6.70" fill="none" stroke="#262626" stroke-width="1.5"><path d="M1 1 L5.10 5.70 L9.20 1"/></svg>
<svg class="r" style="left:1446px;top:131px" width="22" height="24" viewBox="0 0 22 24" ><path d="M19.5 4 V2.3 H2.8 L12.5 11.8 L2.8 21.6 H19.5 V19.8" fill="none" stroke="#424242" stroke-width="1.6" stroke-linejoin="miter"/></svg>
<svg class="r" style="left:1480.1px;top:140.1px" width="10.1" height="6.6" viewBox="0 0 10.10 6.60" fill="none" stroke="#262626" stroke-width="1.5"><path d="M1 1 L5.05 5.60 L9.10 1"/></svg>
<span style="left:1507.97px;top:129.00px;font-size:14px;line-height:14px;font-weight:bold;font-style:normal;color:#1e88d8;font-family:'Liberation Sans', sans-serif;transform:scaleX(0.9382);">A</span>
<span style="left:1507.80px;top:143.00px;font-size:14px;line-height:14px;font-weight:normal;font-style:normal;color:#424242;font-family:'Liberation Sans', sans-serif;transform:scaleX(1.1089);">Z</span>
<svg class="r" style="left:1517px;top:136px" width="16" height="16" viewBox="0 0 16 16" ><path d="M1.5 1.5 H14.5 V3.5 L9.5 8.5 V13.7 H6.5 V8.5 L1.5 3.5 Z" fill="#fff" stroke="#424242" stroke-width="1.4"/></svg>
<svg class="r" style="left:1540.1px;top:140.1px" width="10.2" height="6.6" viewBox="0 0 10.20 6.60" fill="none" stroke="#262626" stroke-width="1.5"><path d="M1 1 L5.10 5.60 L9.20 1"/></svg>
<svg class="r" style="left:1444px;top:170px" width="27" height="24" viewBox="0 0 27 24" ><rect x="1.3" y="1.4" width="23.5" height="20.9" fill="#fafafa" stroke="#424242" stroke-width="1.6"/><path d="M1.3 4.8 H24.8" stroke="#424242" stroke-width="1.3"/><path d="M12.1 7.5 V19 M7.2 14 L12.1 19 L17 14" fill="none" stroke="#1e88d8" stroke-width="1.6"/></svg>
<svg class="r" style="left:1477.1px;top:179.1px" width="10.3" height="6.7" viewBox="0 0 10.30 6.70" fill="none" stroke="#262626" stroke-width="1.5"><path d="M1 1 L5.15 5.70 L9.30 1"/></svg>
<svg class="r" style="left:1508px;top:169px" width="26" height="25" viewBox="0 0 26 25" ><circle cx="15.7" cy="9" r="7.5" fill="#fafafa" stroke="#424242" stroke-width="1.5"/><path d="M10.4 15.3 L1.5 23.8" stroke="#424242" stroke-width="1.6"/></svg>
<svg class="r" style="left:1540.1px;top:179.1px" width="10.2" height="6.7" viewBox="0 0 10.20 6.70" fill="none" stroke="#262626" stroke-width="1.5"><path d="M1 1 L5.10 5.70 L9.20 1"/></svg>
<svg class="r" style="left:1444px;top:208px" width="26" height="26" viewBox="0 0 26 26" ><path d="M2 15 L14.5 2.5 L23.5 11.5 L11 24 Z" fill="#fafafa" stroke="#9b2fae" stroke-width="1.6"/><path d="M2 15 L7.3 9.7 L16.3 18.7 L11 24 Z" fill="#d99ee0" stroke="#9b2fae" stroke-width="1.6"/></svg>
<svg class="r" style="left:1477.1px;top:218.0px" width="10.3" height="6.7" viewBox="0 0 10.30 6.70" fill="none" stroke="#262626" stroke-width="1.5"><path d="M1 1 L5.15 5.70 L9.30 1"/></svg>
<svg class="r" style="left:1595px;top:131px" width="44" height="44" viewBox="0 0 44 44" ><rect x="1.8" y="1.8" width="40" height="40" fill="none" stroke="#d83b01" stroke-width="1.5"/><rect x="6.3" y="6" width="13.6" height="13.8" fill="none" stroke="#d83b01" stroke-width="1.5"/><rect x="24.3" y="6" width="13.6" height="13.8" fill="none" stroke="#d83b01" stroke-width="1.5"/><rect x="6.3" y="24" width="13.6" height="13.8" fill="none" stroke="#d83b01" stroke-width="1.5"/><rect x="24.3" y="24" width="13.6" height="13.8" fill="none" stroke="#d83b01" stroke-width="1.5"/></svg>
<span style="left:1596.45px;top:183.00px;font-size:18px;line-height:18px;font-weight:normal;font-style:normal;color:#262626;font-family:'Liberation Sans', sans-serif;transform:scaleX(1.0641);">Add-</span>
<span style="left:1604.50px;top:207.00px;font-size:18px;line-height:18px;font-weight:normal;font-style:normal;color:#262626;font-family:'Liberation Sans', sans-serif;transform:scaleX(0.9616);">Ins</span>
<svg class="r" style="left:1706px;top:131px" width="45" height="45" viewBox="0 0 45 45" ><rect x="1.7" y="1.7" width="41" height="41" fill="#fafafa" stroke="#424242" stroke-width="1.5"/><rect x="1.7" y="1.7" width="41" height="6" fill="#c8c8c8" stroke="#424242" stroke-width="1.3"/><path d="M1.7 19 H9 M36 19 H42.7 M1.7 30.5 H42.7 M15 30.5 V42.7 M29 30.5 V42.7" stroke="#aaa" stroke-width="1.3"/><circle cx="20.4" cy="18.5" r="12.3" fill="#fafafa" stroke="#424242" stroke-width="1.6"/><path d="M29 27 L42.5 42.5" stroke="#424242" stroke-width="1.6"/><rect x="13" y="17" width="4" height="8.5" fill="#bbb" stroke="#666" stroke-width="0.9"/><rect x="17" y="11" width="4.5" height="14.5" fill="#fff" stroke="#424242" stroke-width="0.9"/><rect x="21.5" y="14" width="4" height="11.5" fill="#8cc0ec" stroke="#1e6fc0" stroke-width="1"/></svg>
<span style="left:1674.87px;top:183.00px;font-size:18px;line-height:18px;font-weight:normal;font-style:normal;color:#262626;font-family:'Liberation Sans', sans-serif;transform:scaleX(0.9618);">Datenanalyse</span>
<div class="r" style="left:39px;top:352px;width:1848px;height:645px;background:#fff"></div>
<div class="r" style="left:39px;top:376px;width:1848px;height:1px;background:#dadada"></div>
<div class="r" style="left:39px;top:401px;width:1848px;height:1px;background:#dadada"></div>
<div class="r" style="left:39px;top:426px;width:1848px;height:1px;background:#dadada"></div>
<div class="r" style="left:39px;top:451px;width:1848px;height:1px;background:#dadada"></div>
<div class="r" style="left:39px;top:476px;width:1848px;height:1px;background:#dadada"></div>
<div class="r" style="left:39px;top:501px;width:1848px;height:1px;background:#dadada"></div>
<div class="r" style="left:39px;top:526px;width:1848px;height:1px;background:#dadada"></div>
<div class="r" style="left:39px;top:551px;width:1848px;height:1px;background:#dadada"></div>
<div class="r" style="left:39px;top:576px;width:1848px;height:1px;background:#dadada"></div>
<div class="r" style="left:39px;top:601px;width:1848px;height:1px;background:#dadada"></div>
<div class="r" style="left:39px;top:626px;width:1848px;height:1px;background:#dadada"></div>
<div class="r" style="left:39px;top:651px;width:1848px;height:1px;background:#dadada"></div>
<div class="r" style="left:39px;top:676px;width:1848px;height:1px;background:#dadada"></div>
<div class="r" style="left:39px;top:701px;width:1848px;height:1px;background:#dadada"></div>
<div class="r" style="left:39px;top:726px;width:1848px;height:1px;background:#dadada"></div>
<div class="r" style="left:39px;top:751px;width:1848px;height:1px;background:#dadada"></div>
<div class="r" style="left:39px;top:776px;width:1848px;height:1px;background:#dadada"></div>
<div class="r" style="left:39px;top:801px;width:1848px;height:1px;background:#dadada"></div>
<div class="r" style="left:39px;top:826px;width:1848px;height:1px;background:#dadada"></div>
<div class="r" style="left:39px;top:851px;width:1848px;height:1px;background:#dadada"></div>
<div class="r" style="left:39px;top:876px;width:1848px;height:1px;background:#dadada"></div>
<div class="r" style="left:39px;top:901px;width:1848px;height:1px;background:#dadada"></div>
<div class="r" style="left:39px;top:926px;width:1848px;height:1px;background:#dadada"></div>
<div class="r" style="left:39px;top:951px;width:1848px;height:1px;background:#dadada"></div>
<div class="r" style="left:39px;top:976px;width:1848px;height:1px;background:#dadada"></div>
<div class="r" style="left:212px;top:352px;width:1px;height:645px;background:#dadada"></div>
<div class="r" style="left:411px;top:352px;width:1px;height:645px;background:#dadada"></div>
<div class="r" style="left:1391px;top:352px;width:1px;height:645px;background:#dadada"></div>
<div class="r" style="left:1514px;top:352px;width:1px;height:645px;background:#dadada"></div>
<div class="r" style="left:1600px;top:352px;width:1px;height:645px;background:#dadada"></div>
<div class="r" style="left:1686px;top:352px;width:1px;height:645px;background:#dadada"></div>
<div class="r" style="left:1860px;top:352px;width:1px;height:645px;background:#dadada"></div>
<div class="r" style="left:1887px;top:352px;width:1px;height:645px;background:#dadada"></div>
<div class="r" style="left:39px;top:401px;width:1822px;height:26px;background:#ffff00"></div>
<div class="r" style="left:39px;top:426px;width:1822px;height:26px;background:#ffff00"></div>
<div class="r" style="left:1600px;top:451px;width:87px;height:26px;background:#ccffcc"></div>
<div class="r" style="left:1600px;top:476px;width:87px;height:26px;background:#ccffcc"></div>
<div class="r" style="left:1600px;top:501px;width:87px;height:26px;background:#ccffcc"></div>
<div class="r" style="left:39px;top:526px;width:1822px;height:26px;background:#ffff00"></div>
<div class="r" style="left:1600px;top:551px;width:87px;height:26px;background:#ccffcc"></div>
<div class="r" style="left:1600px;top:576px;width:87px;height:26px;background:#ccffcc"></div>
<div class="r" style="left:1600px;top:601px;width:87px;height:26px;background:#ccffcc"></div>
<div class="r" style="left:1600px;top:626px;width:87px;height:26px;background:#ccffcc"></div>
<div class="r" style="left:1600px;top:651px;width:87px;height:26px;background:#ccffcc"></div>
<div class="r" style="left:39px;top:676px;width:1822px;height:26px;background:#ffff00"></div>
<div class="r" style="left:1600px;top:701px;width:87px;height:26px;background:#ccffcc"></div>
<div class="r" style="left:1600px;top:726px;width:87px;height:26px;background:#ccffcc"></div>
<div class="r" style="left:1600px;top:751px;width:87px;height:26px;background:#ccffcc"></div>
<div class="r" style="left:1600px;top:776px;width:87px;height:26px;background:#ccffcc"></div>
<div class="r" style="left:39px;top:801px;width:1822px;height:26px;background:#ffff00"></div>
<div class="r" style="left:1600px;top:826px;width:87px;height:26px;background:#ccffcc"></div>
<div class="r" style="left:1600px;top:851px;width:87px;height:26px;background:#ccffcc"></div>
<div class="r" style="left:1600px;top:876px;width:87px;height:26px;background:#ccffcc"></div>
<div class="r" style="left:39px;top:901px;width:1822px;height:26px;background:#ffff00"></div>
<div class="r" style="left:39px;top:926px;width:1822px;height:26px;background:#ffff00"></div>
<div class="r" style="left:1600px;top:951px;width:87px;height:26px;background:#ccffcc"></div>
<div class="r" style="left:39px;top:976px;width:1822px;height:21px;background:#ffff00"></div>
<span style="left:42.11px;top:355.00px;font-size:20px;line-height:20px;font-weight:bold;font-style:normal;color:#000;font-family:'Liberation Sans', sans-serif;transform:scaleX(0.8598);">OZ</span>
<span style="left:215.33px;top:355.00px;font-size:20px;line-height:20px;font-weight:bold;font-style:normal;color:#000;font-family:'Liberation Sans', sans-serif;transform:scaleX(0.9414);">PosArt</span>
<span style="left:414.49px;top:355.00px;font-size:20px;line-height:20px;font-weight:bold;font-style:normal;color:#000;font-family:'Liberation Sans', sans-serif;transform:scaleX(0.9694);">Kurztext</span>
<span style="left:1394.93px;top:355.00px;font-size:20px;line-height:20px;font-weight:bold;font-style:normal;color:#000;font-family:'Liberation Sans', sans-serif;transform:scaleX(0.9413);">Menge</span>
<span style="left:1517.65px;top:355.00px;font-size:20px;line-height:20px;font-weight:bold;font-style:normal;color:#000;font-family:'Liberation Sans', sans-serif;transform:scaleX(0.9224);">Einheit</span>
<span style="left:1603.74px;top:355.00px;font-size:20px;line-height:20px;font-weight:bold;font-style:normal;color:#000;font-family:'Liberation Sans', sans-serif;transform:scaleX(0.9331);">EP</span>
<span style="left:1690.31px;top:355.00px;font-size:20px;line-height:20px;font-weight:bold;font-style:normal;color:#000;font-family:'Liberation Sans', sans-serif;transform:scaleX(0.8686);">GP</span>
<span style="left:50.38px;top:405.00px;font-size:20px;line-height:20px;font-weight:bold;font-style:normal;color:#000;font-family:'Liberation Sans', sans-serif;transform:scaleX(0.8000);">1</span>
<span style="left:215.57px;top:405.00px;font-size:20px;line-height:20px;font-weight:bold;font-style:normal;color:#000;font-family:'Liberation Sans', sans-serif;transform:scaleX(0.9141);">BEREICH</span>
<span style="left:414.71px;top:405.00px;font-size:20px;line-height:20px;font-weight:bold;font-style:normal;color:#000;font-family:'Liberation Sans', sans-serif;transform:scaleX(0.9580);">Bauhauptgewerke</span>
<span style="left:1801.11px;top:405.00px;font-size:20px;line-height:20px;font-weight:bold;font-style:normal;color:#000;font-family:'Liberation Sans', sans-serif;transform:scaleX(0.9899);">0,00 €</span>
<span style="left:51.03px;top:430.00px;font-size:20px;line-height:20px;font-weight:bold;font-style:normal;color:#000;font-family:'Liberation Sans', sans-serif;transform:scaleX(0.8000);">1.</span>
<span style="left:72.48px;top:430.00px;font-size:20px;line-height:20px;font-weight:bold;font-style:normal;color:#000;font-family:'Liberation Sans', sans-serif;transform:scaleX(0.8000);">1</span>
<span style="left:215.57px;top:430.00px;font-size:20px;line-height:20px;font-weight:bold;font-style:normal;color:#000;font-family:'Liberation Sans', sans-serif;transform:scaleX(0.9141);">BEREICH</span>
<span style="left:414.72px;top:430.00px;font-size:20px;line-height:20px;font-weight:bold;font-style:normal;color:#000;font-family:'Liberation Sans', sans-serif;transform:scaleX(0.9515);">Baustelleneinrichtung</span>
<span style="left:1801.11px;top:430.00px;font-size:20px;line-height:20px;font-weight:bold;font-style:normal;color:#000;font-family:'Liberation Sans', sans-serif;transform:scaleX(0.9899);">0,00 €</span>
<span style="left:51.03px;top:455.00px;font-size:20px;line-height:20px;font-weight:bold;font-style:normal;color:#000;font-family:'Liberation Sans', sans-serif;transform:scaleX(0.8000);">1.</span>
<span style="left:73.13px;top:455.00px;font-size:20px;line-height:20px;font-weight:bold;font-style:normal;color:#000;font-family:'Liberation Sans', sans-serif;transform:scaleX(0.8000);">1.</span>
<span style="left:95.36px;top:455.00px;font-size:20px;line-height:20px;font-weight:bold;font-style:normal;color:#000;font-family:'Liberation Sans', sans-serif;transform:scaleX(0.8288);">10</span>
<span style="left:215.23px;top:455.00px;font-size:20px;line-height:20px;font-weight:normal;font-style:normal;color:#000;font-family:'Liberation Sans', sans-serif;transform:scaleX(0.9489);">NORMAL</span>
<span style="left:414.29px;top:455.00px;font-size:20px;line-height:20px;font-weight:normal;font-style:normal;color:#000;font-family:'Liberation Sans', sans-serif;transform:scaleX(1.0378);">Baustelleneinrichtung einrichten, vorhalten, räumen</span>
<span style="left:1464.32px;top:455.00px;font-size:20px;line-height:20px;font-weight:normal;font-style:normal;color:#000;font-family:'Liberation Sans', sans-serif;transform:scaleX(0.9205);">1,000</span>
<span style="left:1517.67px;top:455.00px;font-size:20px;line-height:20px;font-weight:normal;font-style:normal;color:#000;font-family:'Liberation Sans', sans-serif;transform:scaleX(1.0240);">psch</span>
<span style="left:1616.21px;top:455.00px;font-size:20px;line-height:20px;font-weight:normal;font-style:normal;color:#000;font-family:'Liberation Sans', sans-serif;transform:scaleX(0.9901);">0,000 €</span>
<span style="left:1801.11px;top:455.00px;font-size:20px;line-height:20px;font-weight:normal;font-style:normal;color:#000;font-family:'Liberation Sans', sans-serif;transform:scaleX(0.9881);">0,00 €</span>
<span style="left:51.03px;top:480.00px;font-size:20px;line-height:20px;font-weight:bold;font-style:normal;color:#000;font-family:'Liberation Sans', sans-serif;transform:scaleX(0.8000);">1.</span>
<span style="left:73.13px;top:480.00px;font-size:20px;line-height:20px;font-weight:bold;font-style:normal;color:#000;font-family:'Liberation Sans', sans-serif;transform:scaleX(0.8000);">1.</span>
<span style="left:94.51px;top:480.00px;font-size:20px;line-height:20px;font-weight:bold;font-style:normal;color:#000;font-family:'Liberation Sans', sans-serif;transform:scaleX(0.8000);">10.1</span>
<span style="left:215.26px;top:480.00px;font-size:20px;line-height:20px;font-weight:normal;font-style:normal;color:#000;font-family:'Liberation Sans', sans-serif;transform:scaleX(0.9344);">BEDARF(MIT GB)</span>
<span style="left:414.30px;top:480.00px;font-size:20px;line-height:20px;font-weight:normal;font-style:normal;color:#000;font-family:'Liberation Sans', sans-serif;transform:scaleX(1.0281);">Betreiben der Wasserhaltungsanlage</span>
<span style="left:1464.32px;top:480.00px;font-size:20px;line-height:20px;font-weight:normal;font-style:normal;color:#000;font-family:'Liberation Sans', sans-serif;transform:scaleX(0.9205);">1,000</span>
<span style="left:1517.35px;top:480.00px;font-size:20px;line-height:20px;font-weight:normal;font-style:normal;color:#000;font-family:'Liberation Sans', sans-serif;">Psch</span>
<span style="left:1616.21px;top:480.00px;font-size:20px;line-height:20px;font-weight:normal;font-style:normal;color:#000;font-family:'Liberation Sans', sans-serif;transform:scaleX(0.9901);">0,000 €</span>
<span style="left:1801.11px;top:480.00px;font-size:20px;line-height:20px;font-weight:normal;font-style:normal;color:#000;font-family:'Liberation Sans', sans-serif;transform:scaleX(0.9881);">0,00 €</span>
<span style="left:51.03px;top:505.00px;font-size:20px;line-height:20px;font-weight:bold;font-style:normal;color:#000;font-family:'Liberation Sans', sans-serif;transform:scaleX(0.8000);">1.</span>
<span style="left:73.13px;top:505.00px;font-size:20px;line-height:20px;font-weight:bold;font-style:normal;color:#000;font-family:'Liberation Sans', sans-serif;transform:scaleX(0.8000);">1.</span>
<span style="left:95.31px;top:505.00px;font-size:20px;line-height:20px;font-weight:bold;font-style:normal;color:#000;font-family:'Liberation Sans', sans-serif;transform:scaleX(0.8702);">10.A</span>
<span style="left:215.26px;top:505.00px;font-size:20px;line-height:20px;font-weight:normal;font-style:normal;color:#000;font-family:'Liberation Sans', sans-serif;transform:scaleX(0.9344);">BEDARF(MIT GB)</span>
<span style="left:414.31px;top:505.00px;font-size:20px;line-height:20px;font-weight:normal;font-style:normal;color:#000;font-family:'Liberation Sans', sans-serif;transform:scaleX(1.0238);">Betreiben der Wasserhaltungsanlage mit Überwachung</span>
<span style="left:1464.32px;top:505.00px;font-size:20px;line-height:20px;font-weight:normal;font-style:normal;color:#000;font-family:'Liberation Sans', sans-serif;transform:scaleX(0.9205);">1,000</span>
<span style="left:1517.50px;top:505.00px;font-size:20px;line-height:20px;font-weight:normal;font-style:normal;color:#000;font-family:'Liberation Sans', sans-serif;transform:scaleX(0.9110);">PSCH</span>
<span style="left:1616.21px;top:505.00px;font-size:20px;line-height:20px;font-weight:normal;font-style:normal;color:#000;font-family:'Liberation Sans', sans-serif;transform:scaleX(0.9901);">0,000 €</span>
<span style="left:1801.11px;top:505.00px;font-size:20px;line-height:20px;font-weight:normal;font-style:normal;color:#000;font-family:'Liberation Sans', sans-serif;transform:scaleX(0.9881);">0,00 €</span>
<span style="left:51.03px;top:530.00px;font-size:20px;line-height:20px;font-weight:bold;font-style:normal;color:#000;font-family:'Liberation Sans', sans-serif;transform:scaleX(0.8000);">1.</span>
<span style="left:73.63px;top:530.00px;font-size:20px;line-height:20px;font-weight:bold;font-style:normal;color:#000;font-family:'Liberation Sans', sans-serif;transform:scaleX(0.9534);">2</span>
<span style="left:215.57px;top:530.00px;font-size:20px;line-height:20px;font-weight:bold;font-style:normal;color:#000;font-family:'Liberation Sans', sans-serif;transform:scaleX(0.9141);">BEREICH</span>
<span style="left:414.68px;top:530.00px;font-size:20px;line-height:20px;font-weight:bold;font-style:normal;color:#000;font-family:'Liberation Sans', sans-serif;transform:scaleX(0.9788);">Erdarbeiten</span>
<span style="left:1801.11px;top:530.00px;font-size:20px;line-height:20px;font-weight:bold;font-style:normal;color:#000;font-family:'Liberation Sans', sans-serif;transform:scaleX(0.9899);">0,00 €</span>
<span style="left:51.03px;top:555.00px;font-size:20px;line-height:20px;font-weight:bold;font-style:normal;color:#000;font-family:'Liberation Sans', sans-serif;transform:scaleX(0.8000);">1.</span>
<span style="left:73.66px;top:555.00px;font-size:20px;line-height:20px;font-weight:bold;font-style:normal;color:#000;font-family:'Liberation Sans', sans-serif;transform:scaleX(0.9178);">2.</span>
<span style="left:97.86px;top:555.00px;font-size:20px;line-height:20px;font-weight:bold;font-style:normal;color:#000;font-family:'Liberation Sans', sans-serif;transform:scaleX(0.8288);">10</span>
<span style="left:215.23px;top:555.00px;font-size:20px;line-height:20px;font-weight:normal;font-style:normal;color:#000;font-family:'Liberation Sans', sans-serif;transform:scaleX(0.9489);">NORMAL</span>
<span style="left:414.36px;top:555.00px;font-size:20px;line-height:20px;font-weight:normal;font-style:normal;color:#000;font-family:'Liberation Sans', sans-serif;transform:scaleX(0.9970);">Boden für Baugrube, BK 3</span>
<span style="left:1440.87px;top:555.00px;font-size:20px;line-height:20px;font-weight:normal;font-style:normal;color:#000;font-family:'Liberation Sans', sans-serif;transform:scaleX(0.9627);">450,000</span>
<span style="left:1517.66px;top:555.00px;font-size:20px;line-height:20px;font-weight:normal;font-style:normal;color:#000;font-family:'Liberation Sans', sans-serif;transform:scaleX(0.9941);">m3</span>
<span style="left:1616.21px;top:555.00px;font-size:20px;line-height:20px;font-weight:normal;font-style:normal;color:#000;font-family:'Liberation Sans', sans-serif;transform:scaleX(0.9901);">0,000 €</span>
<span style="left:1801.11px;top:555.00px;font-size:20px;line-height:20px;font-weight:normal;font-style:normal;color:#000;font-family:'Liberation Sans', sans-serif;transform:scaleX(0.9881);">0,00 €</span>
<span style="left:51.03px;top:580.00px;font-size:20px;line-height:20px;font-weight:bold;font-style:normal;color:#000;font-family:'Liberation Sans', sans-serif;transform:scaleX(0.8000);">1.</span>
<span style="left:73.66px;top:580.00px;font-size:20px;line-height:20px;font-weight:bold;font-style:normal;color:#000;font-family:'Liberation Sans', sans-serif;transform:scaleX(0.9178);">2.</span>
<span style="left:98.22px;top:580.00px;font-size:20px;line-height:20px;font-weight:bold;font-style:normal;color:#000;font-family:'Liberation Sans', sans-serif;transform:scaleX(0.9662);">20</span>
<span style="left:215.23px;top:580.00px;font-size:20px;line-height:20px;font-weight:normal;font-style:normal;color:#000;font-family:'Liberation Sans', sans-serif;transform:scaleX(0.9489);">NORMAL</span>
<span style="left:414.37px;top:580.00px;font-size:20px;line-height:20px;font-weight:normal;font-style:normal;color:#000;font-family:'Liberation Sans', sans-serif;transform:scaleX(0.9903);">Boden Graben Kanal Tiefe bis 1,45 m lösen, lagern Bodenklasse 3</span>
<span style="left:1426.25px;top:580.00px;font-size:20px;line-height:20px;font-weight:normal;font-style:normal;color:#000;font-family:'Liberation Sans', sans-serif;transform:scaleX(0.9461);">7.200,000</span>
<span style="left:1517.66px;top:580.00px;font-size:20px;line-height:20px;font-weight:normal;font-style:normal;color:#000;font-family:'Liberation Sans', sans-serif;transform:scaleX(0.9941);">m3</span>
<span style="left:1616.21px;top:580.00px;font-size:20px;line-height:20px;font-weight:normal;font-style:normal;color:#000;font-family:'Liberation Sans', sans-serif;transform:scaleX(0.9901);">0,000 €</span>
<span style="left:1801.11px;top:580.00px;font-size:20px;line-height:20px;font-weight:normal;font-style:normal;color:#000;font-family:'Liberation Sans', sans-serif;transform:scaleX(0.9881);">0,00 €</span>
<span style="left:51.03px;top:605.00px;font-size:20px;line-height:20px;font-weight:bold;font-style:normal;color:#000;font-family:'Liberation Sans', sans-serif;transform:scaleX(0.8000);">1.</span>
<span style="left:73.66px;top:605.00px;font-size:20px;line-height:20px;font-weight:bold;font-style:normal;color:#000;font-family:'Liberation Sans', sans-serif;transform:scaleX(0.9178);">2.</span>
<span style="left:98.46px;top:605.00px;font-size:20px;line-height:20px;font-weight:bold;font-style:normal;color:#000;font-family:'Liberation Sans', sans-serif;transform:scaleX(0.9690);">30</span>
<span style="left:215.23px;top:605.00px;font-size:20px;line-height:20px;font-weight:normal;font-style:normal;color:#000;font-family:'Liberation Sans', sans-serif;transform:scaleX(0.9489);">NORMAL</span>
<span style="left:415.05px;top:605.00px;font-size:20px;line-height:20px;font-weight:normal;font-style:normal;color:#000;font-family:'Liberation Sans', sans-serif;">Oberboden abtragen, lagern d= 30 cm Bodengruppe 4</span>
<span style="left:1444.63px;top:605.00px;font-size:20px;line-height:20px;font-weight:normal;font-style:normal;color:#000;font-family:'Liberation Sans', sans-serif;transform:scaleX(0.9100);">124,000</span>
<span style="left:1517.64px;top:605.00px;font-size:20px;line-height:20px;font-weight:normal;font-style:normal;color:#000;font-family:'Liberation Sans', sans-serif;transform:scaleX(1.0079);">m2</span>
<span style="left:1616.21px;top:605.00px;font-size:20px;line-height:20px;font-weight:normal;font-style:normal;color:#000;font-family:'Liberation Sans', sans-serif;transform:scaleX(0.9901);">0,000 €</span>
<span style="left:1801.11px;top:605.00px;font-size:20px;line-height:20px;font-weight:normal;font-style:normal;color:#000;font-family:'Liberation Sans', sans-serif;transform:scaleX(0.9881);">0,00 €</span>
<span style="left:51.03px;top:630.00px;font-size:20px;line-height:20px;font-weight:bold;font-style:normal;color:#000;font-family:'Liberation Sans', sans-serif;transform:scaleX(0.8000);">1.</span>
<span style="left:73.66px;top:630.00px;font-size:20px;line-height:20px;font-weight:bold;font-style:normal;color:#000;font-family:'Liberation Sans', sans-serif;transform:scaleX(0.9178);">2.</span>
<span style="left:98.61px;top:630.00px;font-size:20px;line-height:20px;font-weight:bold;font-style:normal;color:#000;font-family:'Liberation Sans', sans-serif;transform:scaleX(0.9716);">40</span>
<span style="left:215.91px;top:630.00px;font-size:20px;line-height:20px;font-weight:normal;font-style:normal;color:#000;font-family:'Liberation Sans', sans-serif;transform:scaleX(0.8893);">GRUNDPOS(1.0)</span>
<span style="left:414.34px;top:630.00px;font-size:20px;line-height:20px;font-weight:normal;font-style:normal;color:#000;font-family:'Liberation Sans', sans-serif;transform:scaleX(1.0035);">Betonpflaster L/B 100/100 mm H 80 mm  grau</span>
<span style="left:1428.11px;top:630.00px;font-size:20px;line-height:20px;font-weight:normal;font-style:normal;color:#000;font-family:'Liberation Sans', sans-serif;transform:scaleX(0.9250);">1.245,000</span>
<span style="left:1517.64px;top:630.00px;font-size:20px;line-height:20px;font-weight:normal;font-style:normal;color:#000;font-family:'Liberation Sans', sans-serif;transform:scaleX(1.0079);">m2</span>
<span style="left:1616.21px;top:630.00px;font-size:20px;line-height:20px;font-weight:normal;font-style:normal;color:#000;font-family:'Liberation Sans', sans-serif;transform:scaleX(0.9901);">0,000 €</span>
<span style="left:1801.11px;top:630.00px;font-size:20px;line-height:20px;font-weight:normal;font-style:normal;color:#000;font-family:'Liberation Sans', sans-serif;transform:scaleX(0.9881);">0,00 €</span>
<span style="left:51.03px;top:655.00px;font-size:20px;line-height:20px;font-weight:bold;font-style:normal;color:#000;font-family:'Liberation Sans', sans-serif;transform:scaleX(0.8000);">1.</span>
<span style="left:73.66px;top:655.00px;font-size:20px;line-height:20px;font-weight:bold;font-style:normal;color:#000;font-family:'Liberation Sans', sans-serif;transform:scaleX(0.9178);">2.</span>
<span style="left:98.31px;top:655.00px;font-size:20px;line-height:20px;font-weight:bold;font-style:normal;color:#000;font-family:'Liberation Sans', sans-serif;transform:scaleX(0.9760);">50</span>
<span style="left:216.71px;top:655.00px;font-size:20px;line-height:20px;font-weight:normal;font-style:normal;color:#000;font-family:'Liberation Sans', sans-serif;transform:scaleX(0.8868);">WAHLPOS(1.1 zu 1.0)</span>
<span style="left:414.35px;top:655.00px;font-size:20px;line-height:20px;font-weight:normal;font-style:normal;color:#000;font-family:'Liberation Sans', sans-serif;">Betonpflaster L/B 100/100 mm H 80 mm  in BVBS-blau</span>
<span style="left:1428.11px;top:655.00px;font-size:20px;line-height:20px;font-weight:normal;font-style:normal;color:#000;font-family:'Liberation Sans', sans-serif;transform:scaleX(0.9250);">1.245,000</span>
<span style="left:1517.64px;top:655.00px;font-size:20px;line-height:20px;font-weight:normal;font-style:normal;color:#000;font-family:'Liberation Sans', sans-serif;transform:scaleX(1.0079);">m2</span>
<span style="left:1616.21px;top:655.00px;font-size:20px;line-height:20px;font-weight:normal;font-style:normal;color:#000;font-family:'Liberation Sans', sans-serif;transform:scaleX(0.9901);">0,000 €</span>
<span style="left:1689.86px;top:655.00px;font-size:20px;line-height:20px;font-weight:normal;font-style:normal;color:#000;font-family:'Liberation Sans', sans-serif;transform:scaleX(0.9957);">nur EP</span>
<span style="left:51.03px;top:680.00px;font-size:20px;line-height:20px;font-weight:bold;font-style:normal;color:#000;font-family:'Liberation Sans', sans-serif;transform:scaleX(0.8000);">1.</span>
<span style="left:73.88px;top:680.00px;font-size:20px;line-height:20px;font-weight:bold;font-style:normal;color:#000;font-family:'Liberation Sans', sans-serif;transform:scaleX(0.9246);">3</span>
<span style="left:215.57px;top:680.00px;font-size:20px;line-height:20px;font-weight:bold;font-style:normal;color:#000;font-family:'Liberation Sans', sans-serif;transform:scaleX(0.9141);">BEREICH</span>
<span style="left:414.65px;top:680.00px;font-size:20px;line-height:20px;font-weight:bold;font-style:normal;color:#000;font-family:'Liberation Sans', sans-serif;">Maurerarbeiten</span>
<span style="left:1801.11px;top:680.00px;font-size:20px;line-height:20px;font-weight:bold;font-style:normal;color:#000;font-family:'Liberation Sans', sans-serif;transform:scaleX(0.9899);">0,00 €</span>
<span style="left:51.03px;top:705.00px;font-size:20px;line-height:20px;font-weight:bold;font-style:normal;color:#000;font-family:'Liberation Sans', sans-serif;transform:scaleX(0.8000);">1.</span>
<span style="left:73.89px;top:705.00px;font-size:20px;line-height:20px;font-weight:bold;font-style:normal;color:#000;font-family:'Liberation Sans', sans-serif;transform:scaleX(0.9024);">3.</span>
<span style="left:97.86px;top:705.00px;font-size:20px;line-height:20px;font-weight:bold;font-style:normal;color:#000;font-family:'Liberation Sans', sans-serif;transform:scaleX(0.8288);">10</span>
<span style="left:215.23px;top:705.00px;font-size:20px;line-height:20px;font-weight:normal;font-style:normal;color:#000;font-family:'Liberation Sans', sans-serif;transform:scaleX(0.9489);">NORMAL</span>
<span style="left:414.40px;top:705.00px;font-size:20px;line-height:20px;font-weight:normal;font-style:normal;color:#000;font-family:'Liberation Sans', sans-serif;transform:scaleX(0.9688);">Kalksandstein-Innenwand KS-R SFK 20 RDK 1,8 D 11,5cm</span>
<span style="left:1440.87px;top:705.00px;font-size:20px;line-height:20px;font-weight:normal;font-style:normal;color:#000;font-family:'Liberation Sans', sans-serif;transform:scaleX(0.9627);">440,000</span>
<span style="left:1517.64px;top:705.00px;font-size:20px;line-height:20px;font-weight:normal;font-style:normal;color:#000;font-family:'Liberation Sans', sans-serif;transform:scaleX(1.0079);">m2</span>
<span style="left:1616.21px;top:705.00px;font-size:20px;line-height:20px;font-weight:normal;font-style:normal;color:#000;font-family:'Liberation Sans', sans-serif;transform:scaleX(0.9901);">0,000 €</span>
<span style="left:1801.11px;top:705.00px;font-size:20px;line-height:20px;font-weight:normal;font-style:normal;color:#000;font-family:'Liberation Sans', sans-serif;transform:scaleX(0.9881);">0,00 €</span>
<span style="left:51.03px;top:730.00px;font-size:20px;line-height:20px;font-weight:bold;font-style:normal;color:#000;font-family:'Liberation Sans', sans-serif;transform:scaleX(0.8000);">1.</span>
<span style="left:73.89px;top:730.00px;font-size:20px;line-height:20px;font-weight:bold;font-style:normal;color:#000;font-family:'Liberation Sans', sans-serif;transform:scaleX(0.9024);">3.</span>
<span style="left:98.22px;top:730.00px;font-size:20px;line-height:20px;font-weight:bold;font-style:normal;color:#000;font-family:'Liberation Sans', sans-serif;transform:scaleX(0.9662);">20</span>
<span style="left:215.23px;top:730.00px;font-size:20px;line-height:20px;font-weight:normal;font-style:normal;color:#000;font-family:'Liberation Sans', sans-serif;transform:scaleX(0.9489);">NORMAL</span>
<span style="left:414.40px;top:730.00px;font-size:20px;line-height:20px;font-weight:normal;font-style:normal;color:#000;font-family:'Liberation Sans', sans-serif;transform:scaleX(0.9721);">Kalksandstein-Innenwand KS-R SFK 20 RDK 1,8 D 17,5cm</span>
<span style="left:1440.57px;top:730.00px;font-size:20px;line-height:20px;font-weight:normal;font-style:normal;color:#000;font-family:'Liberation Sans', sans-serif;transform:scaleX(0.9668);">350,000</span>
<span style="left:1517.64px;top:730.00px;font-size:20px;line-height:20px;font-weight:normal;font-style:normal;color:#000;font-family:'Liberation Sans', sans-serif;transform:scaleX(1.0079);">m2</span>
<span style="left:1616.21px;top:730.00px;font-size:20px;line-height:20px;font-weight:normal;font-style:normal;color:#000;font-family:'Liberation Sans', sans-serif;transform:scaleX(0.9901);">0,000 €</span>
<span style="left:1801.11px;top:730.00px;font-size:20px;line-height:20px;font-weight:normal;font-style:normal;color:#000;font-family:'Liberation Sans', sans-serif;transform:scaleX(0.9881);">0,00 €</span>
<span style="left:51.03px;top:755.00px;font-size:20px;line-height:20px;font-weight:bold;font-style:normal;color:#000;font-family:'Liberation Sans', sans-serif;transform:scaleX(0.8000);">1.</span>
<span style="left:73.89px;top:755.00px;font-size:20px;line-height:20px;font-weight:bold;font-style:normal;color:#000;font-family:'Liberation Sans', sans-serif;transform:scaleX(0.9024);">3.</span>
<span style="left:98.46px;top:755.00px;font-size:20px;line-height:20px;font-weight:bold;font-style:normal;color:#000;font-family:'Liberation Sans', sans-serif;transform:scaleX(0.9690);">30</span>
<span style="left:215.23px;top:755.00px;font-size:20px;line-height:20px;font-weight:normal;font-style:normal;color:#000;font-family:'Liberation Sans', sans-serif;transform:scaleX(0.9489);">NORMAL</span>
<span style="left:415.95px;top:755.00px;font-size:20px;line-height:20px;font-weight:normal;font-style:normal;color:#000;font-family:'Liberation Sans', sans-serif;transform:scaleX(0.9874);">Außenwand Porenbeton-Planelement SFK 4 D 36,5cm 0,15W/(mK)</span>
<span style="left:1440.33px;top:755.00px;font-size:20px;line-height:20px;font-weight:normal;font-style:normal;color:#000;font-family:'Liberation Sans', sans-serif;transform:scaleX(0.9702);">750,000</span>
<span style="left:1517.66px;top:755.00px;font-size:20px;line-height:20px;font-weight:normal;font-style:normal;color:#000;font-family:'Liberation Sans', sans-serif;transform:scaleX(0.9941);">m3</span>
<span style="left:1616.21px;top:755.00px;font-size:20px;line-height:20px;font-weight:normal;font-style:normal;color:#000;font-family:'Liberation Sans', sans-serif;transform:scaleX(0.9901);">0,000 €</span>
<span style="left:1801.11px;top:755.00px;font-size:20px;line-height:20px;font-weight:normal;font-style:normal;color:#000;font-family:'Liberation Sans', sans-serif;transform:scaleX(0.9881);">0,00 €</span>
<span style="left:51.03px;top:780.00px;font-size:20px;line-height:20px;font-weight:bold;font-style:normal;color:#000;font-family:'Liberation Sans', sans-serif;transform:scaleX(0.8000);">1.</span>
<span style="left:73.89px;top:780.00px;font-size:20px;line-height:20px;font-weight:bold;font-style:normal;color:#000;font-family:'Liberation Sans', sans-serif;transform:scaleX(0.9024);">3.</span>
<span style="left:98.61px;top:780.00px;font-size:20px;line-height:20px;font-weight:bold;font-style:normal;color:#000;font-family:'Liberation Sans', sans-serif;transform:scaleX(0.9716);">40</span>
<span style="left:215.23px;top:780.00px;font-size:20px;line-height:20px;font-weight:normal;font-style:normal;color:#000;font-family:'Liberation Sans', sans-serif;transform:scaleX(0.9489);">NORMAL</span>
<span style="left:415.95px;top:780.00px;font-size:20px;line-height:20px;font-weight:normal;font-style:normal;color:#000;font-family:'Liberation Sans', sans-serif;transform:scaleX(0.9411);">Außenwand VHLz SFK 28 RDK 1,6 D 36,5cm</span>
<span style="left:1440.33px;top:780.00px;font-size:20px;line-height:20px;font-weight:normal;font-style:normal;color:#000;font-family:'Liberation Sans', sans-serif;transform:scaleX(0.9702);">783,030</span>
<span style="left:1517.66px;top:780.00px;font-size:20px;line-height:20px;font-weight:normal;font-style:normal;color:#000;font-family:'Liberation Sans', sans-serif;transform:scaleX(0.9941);">m3</span>
<span style="left:1616.21px;top:780.00px;font-size:20px;line-height:20px;font-weight:normal;font-style:normal;color:#000;font-family:'Liberation Sans', sans-serif;transform:scaleX(0.9901);">0,000 €</span>
<span style="left:1801.11px;top:780.00px;font-size:20px;line-height:20px;font-weight:normal;font-style:normal;color:#000;font-family:'Liberation Sans', sans-serif;transform:scaleX(0.9881);">0,00 €</span>
<span style="left:51.03px;top:805.00px;font-size:20px;line-height:20px;font-weight:bold;font-style:normal;color:#000;font-family:'Liberation Sans', sans-serif;transform:scaleX(0.8000);">1.</span>
<span style="left:74.02px;top:805.00px;font-size:20px;line-height:20px;font-weight:bold;font-style:normal;color:#000;font-family:'Liberation Sans', sans-serif;transform:scaleX(0.9346);">4</span>
<span style="left:215.57px;top:805.00px;font-size:20px;line-height:20px;font-weight:bold;font-style:normal;color:#000;font-family:'Liberation Sans', sans-serif;transform:scaleX(0.9141);">BEREICH</span>
<span style="left:414.70px;top:805.00px;font-size:20px;line-height:20px;font-weight:bold;font-style:normal;color:#000;font-family:'Liberation Sans', sans-serif;transform:scaleX(0.9651);">Betonarbeiten</span>
<span style="left:1801.11px;top:805.00px;font-size:20px;line-height:20px;font-weight:bold;font-style:normal;color:#000;font-family:'Liberation Sans', sans-serif;transform:scaleX(0.9899);">0,00 €</span>
<span style="left:51.03px;top:830.00px;font-size:20px;line-height:20px;font-weight:bold;font-style:normal;color:#000;font-family:'Liberation Sans', sans-serif;transform:scaleX(0.8000);">1.</span>
<span style="left:74.03px;top:830.00px;font-size:20px;line-height:20px;font-weight:bold;font-style:normal;color:#000;font-family:'Liberation Sans', sans-serif;transform:scaleX(0.8933);">4.</span>
<span style="left:97.86px;top:830.00px;font-size:20px;line-height:20px;font-weight:bold;font-style:normal;color:#000;font-family:'Liberation Sans', sans-serif;transform:scaleX(0.8288);">10</span>
<span style="left:215.23px;top:830.00px;font-size:20px;line-height:20px;font-weight:normal;font-style:normal;color:#000;font-family:'Liberation Sans', sans-serif;transform:scaleX(0.9489);">NORMAL</span>
<span style="left:415.09px;top:830.00px;font-size:20px;line-height:20px;font-weight:normal;font-style:normal;color:#000;font-family:'Liberation Sans', sans-serif;transform:scaleX(1.0127);">Schalung Deckenplatte GF-Schalungsplatten H 2-3m</span>
<span style="left:1440.53px;top:830.00px;font-size:20px;line-height:20px;font-weight:normal;font-style:normal;color:#000;font-family:'Liberation Sans', sans-serif;transform:scaleX(0.9675);">500,000</span>
<span style="left:1517.64px;top:830.00px;font-size:20px;line-height:20px;font-weight:normal;font-style:normal;color:#000;font-family:'Liberation Sans', sans-serif;transform:scaleX(1.0079);">m2</span>
<span style="left:1616.21px;top:830.00px;font-size:20px;line-height:20px;font-weight:normal;font-style:normal;color:#000;font-family:'Liberation Sans', sans-serif;transform:scaleX(0.9901);">0,000 €</span>
<span style="left:1801.11px;top:830.00px;font-size:20px;line-height:20px;font-weight:normal;font-style:normal;color:#000;font-family:'Liberation Sans', sans-serif;transform:scaleX(0.9881);">0,00 €</span>
<span style="left:51.03px;top:855.00px;font-size:20px;line-height:20px;font-weight:bold;font-style:normal;color:#000;font-family:'Liberation Sans', sans-serif;transform:scaleX(0.8000);">1.</span>
<span style="left:74.03px;top:855.00px;font-size:20px;line-height:20px;font-weight:bold;font-style:normal;color:#000;font-family:'Liberation Sans', sans-serif;transform:scaleX(0.8933);">4.</span>
<span style="left:98.22px;top:855.00px;font-size:20px;line-height:20px;font-weight:bold;font-style:normal;color:#000;font-family:'Liberation Sans', sans-serif;transform:scaleX(0.9662);">20</span>
<span style="left:215.23px;top:855.00px;font-size:20px;line-height:20px;font-weight:normal;font-style:normal;color:#000;font-family:'Liberation Sans', sans-serif;transform:scaleX(0.9489);">NORMAL</span>
<span style="left:415.05px;top:855.00px;font-size:20px;line-height:20px;font-weight:normal;font-style:normal;color:#000;font-family:'Liberation Sans', sans-serif;">Ortbeton Deckenplatte Stahlbeton C20/25 D 20cm</span>
<span style="left:1440.53px;top:855.00px;font-size:20px;line-height:20px;font-weight:normal;font-style:normal;color:#000;font-family:'Liberation Sans', sans-serif;transform:scaleX(0.9675);">500,000</span>
<span style="left:1517.64px;top:855.00px;font-size:20px;line-height:20px;font-weight:normal;font-style:normal;color:#000;font-family:'Liberation Sans', sans-serif;transform:scaleX(1.0079);">m2</span>
<span style="left:1616.21px;top:855.00px;font-size:20px;line-height:20px;font-weight:normal;font-style:normal;color:#000;font-family:'Liberation Sans', sans-serif;transform:scaleX(0.9901);">0,000 €</span>
<span style="left:1801.11px;top:855.00px;font-size:20px;line-height:20px;font-weight:normal;font-style:normal;color:#000;font-family:'Liberation Sans', sans-serif;transform:scaleX(0.9881);">0,00 €</span>
<span style="left:51.03px;top:880.00px;font-size:20px;line-height:20px;font-weight:bold;font-style:normal;color:#000;font-family:'Liberation Sans', sans-serif;transform:scaleX(0.8000);">1.</span>
<span style="left:74.03px;top:880.00px;font-size:20px;line-height:20px;font-weight:bold;font-style:normal;color:#000;font-family:'Liberation Sans', sans-serif;transform:scaleX(0.8933);">4.</span>
<span style="left:98.46px;top:880.00px;font-size:20px;line-height:20px;font-weight:bold;font-style:normal;color:#000;font-family:'Liberation Sans', sans-serif;transform:scaleX(0.9690);">30</span>
<span style="left:215.23px;top:880.00px;font-size:20px;line-height:20px;font-weight:normal;font-style:normal;color:#000;font-family:'Liberation Sans', sans-serif;transform:scaleX(0.9489);">NORMAL</span>
<span style="left:415.05px;top:880.00px;font-size:20px;line-height:20px;font-weight:normal;font-style:normal;color:#000;font-family:'Liberation Sans', sans-serif;transform:scaleX(0.9953);">Ortbeton Außenwand D 24cm Stahlbeton C35/45</span>
<span style="left:1440.33px;top:880.00px;font-size:20px;line-height:20px;font-weight:normal;font-style:normal;color:#000;font-family:'Liberation Sans', sans-serif;transform:scaleX(0.9702);">267,000</span>
<span style="left:1517.66px;top:880.00px;font-size:20px;line-height:20px;font-weight:normal;font-style:normal;color:#000;font-family:'Liberation Sans', sans-serif;transform:scaleX(0.9941);">m3</span>
<span style="left:1616.21px;top:880.00px;font-size:20px;line-height:20px;font-weight:normal;font-style:normal;color:#000;font-family:'Liberation Sans', sans-serif;transform:scaleX(0.9901);">0,000 €</span>
<span style="left:1801.11px;top:880.00px;font-size:20px;line-height:20px;font-weight:normal;font-style:normal;color:#000;font-family:'Liberation Sans', sans-serif;transform:scaleX(0.9881);">0,00 €</span>
<span style="left:52.03px;top:905.00px;font-size:20px;line-height:20px;font-weight:bold;font-style:normal;color:#000;font-family:'Liberation Sans', sans-serif;transform:scaleX(0.9534);">2</span>
<span style="left:215.57px;top:905.00px;font-size:20px;line-height:20px;font-weight:bold;font-style:normal;color:#000;font-family:'Liberation Sans', sans-serif;transform:scaleX(0.9141);">BEREICH</span>
<span style="left:414.71px;top:905.00px;font-size:20px;line-height:20px;font-weight:bold;font-style:normal;color:#000;font-family:'Liberation Sans', sans-serif;transform:scaleX(0.9554);">Baunebengewerke</span>
<span style="left:1801.11px;top:905.00px;font-size:20px;line-height:20px;font-weight:bold;font-style:normal;color:#000;font-family:'Liberation Sans', sans-serif;transform:scaleX(0.9899);">0,00 €</span>
<span style="left:52.06px;top:930.00px;font-size:20px;line-height:20px;font-weight:bold;font-style:normal;color:#000;font-family:'Liberation Sans', sans-serif;transform:scaleX(0.9178);">2.</span>
<span style="left:76.53px;top:930.00px;font-size:20px;line-height:20px;font-weight:bold;font-style:normal;color:#000;font-family:'Liberation Sans', sans-serif;transform:scaleX(0.9684);">0</span>
<span style="left:215.57px;top:930.00px;font-size:20px;line-height:20px;font-weight:bold;font-style:normal;color:#000;font-family:'Liberation Sans', sans-serif;transform:scaleX(0.9141);">BEREICH</span>
<span style="left:414.71px;top:930.00px;font-size:20px;line-height:20px;font-weight:bold;font-style:normal;color:#000;font-family:'Liberation Sans', sans-serif;transform:scaleX(0.9530);">Baunebengewerk Titel 0</span>
<span style="left:1801.11px;top:930.00px;font-size:20px;line-height:20px;font-weight:bold;font-style:normal;color:#000;font-family:'Liberation Sans', sans-serif;transform:scaleX(0.9899);">0,00 €</span>
<span style="left:52.06px;top:955.00px;font-size:20px;line-height:20px;font-weight:bold;font-style:normal;color:#000;font-family:'Liberation Sans', sans-serif;transform:scaleX(0.9178);">2.</span>
<span style="left:76.52px;top:955.00px;font-size:20px;line-height:20px;font-weight:bold;font-style:normal;color:#000;font-family:'Liberation Sans', sans-serif;transform:scaleX(0.9724);">0.</span>
<span style="left:107.83px;top:955.00px;font-size:20px;line-height:20px;font-weight:bold;font-style:normal;color:#000;font-family:'Liberation Sans', sans-serif;transform:scaleX(0.9684);">0</span>
<span style="left:215.23px;top:955.00px;font-size:20px;line-height:20px;font-weight:normal;font-style:normal;color:#000;font-family:'Liberation Sans', sans-serif;transform:scaleX(0.9489);">NORMAL</span>
<span style="left:414.34px;top:955.00px;font-size:20px;line-height:20px;font-weight:normal;font-style:normal;color:#000;font-family:'Liberation Sans', sans-serif;transform:scaleX(1.0079);">Baunebengewerk Position 0</span>
<span style="left:1464.32px;top:955.00px;font-size:20px;line-height:20px;font-weight:normal;font-style:normal;color:#000;font-family:'Liberation Sans', sans-serif;transform:scaleX(0.9205);">1,000</span>
<span style="left:1518.03px;top:955.00px;font-size:20px;line-height:20px;font-weight:normal;font-style:normal;color:#000;font-family:'Liberation Sans', sans-serif;transform:scaleX(1.0789);">Stck</span>
<span style="left:1616.21px;top:955.00px;font-size:20px;line-height:20px;font-weight:normal;font-style:normal;color:#000;font-family:'Liberation Sans', sans-serif;transform:scaleX(0.9901);">0,000 €</span>
<span style="left:1801.11px;top:955.00px;font-size:20px;line-height:20px;font-weight:normal;font-style:normal;color:#000;font-family:'Liberation Sans', sans-serif;transform:scaleX(0.9881);">0,00 €</span>
<span style="left:52.06px;top:980.00px;font-size:20px;line-height:20px;font-weight:bold;font-style:normal;color:#000;font-family:'Liberation Sans', sans-serif;transform:scaleX(0.9178);">2.</span>
<span style="left:75.48px;top:980.00px;font-size:20px;line-height:20px;font-weight:bold;font-style:normal;color:#000;font-family:'Liberation Sans', sans-serif;transform:scaleX(0.8000);">1</span>
<span style="left:215.57px;top:980.00px;font-size:20px;line-height:20px;font-weight:bold;font-style:normal;color:#000;font-family:'Liberation Sans', sans-serif;transform:scaleX(0.9141);">BEREICH</span>
<span style="left:414.67px;top:980.00px;font-size:20px;line-height:20px;font-weight:bold;font-style:normal;color:#000;font-family:'Liberation Sans', sans-serif;transform:scaleX(0.9864);">Elektroarbeiten</span>
<span style="left:1801.11px;top:980.00px;font-size:20px;line-height:20px;font-weight:bold;font-style:normal;color:#000;font-family:'Liberation Sans', sans-serif;transform:scaleX(0.9899);">0,00 €</span>
<div class="r" style="left:1599px;top:450px;width:89px;height:28px;box-sizing:border-box;border:2px solid #1d6b40"></div>
<div class="r" style="left:1601px;top:452px;width:85px;height:24px;box-sizing:border-box;border:1px solid #fff"></div>
<div class="r" style="left:1683px;top:473px;width:6px;height:6px;background:#1d6b40;border:1px solid #fff;box-sizing:content-box;margin:-1px"></div>
<div class="r" style="left:39px;top:402px;width:0;height:0;border-top:9px solid #0f7b0f;border-right:9px solid transparent"></div>
<div class="r" style="left:1687px;top:527px;width:0;height:0;border-top:9px solid #0f7b0f;border-right:9px solid transparent"></div>
<div class="r" style="left:1687px;top:802px;width:0;height:0;border-top:9px solid #0f7b0f;border-right:9px solid transparent"></div>
<div class="r" style="left:39px;top:902px;width:0;height:0;border-top:9px solid #0f7b0f;border-right:9px solid transparent"></div>
<div class="r" style="left:2px;top:326px;width:1886px;height:25px;background:#f0f0f0"></div>
<div class="r" style="left:2px;top:352px;width:36px;height:645px;background:#f0f0f0"></div>
<div class="r" style="left:1600px;top:326px;width:86px;height:25px;background:#d3d3d3"></div>
<div class="r" style="left:1600px;top:349px;width:87px;height:2px;background:#1e6b41"></div>
<div class="r" style="left:2px;top:452px;width:36px;height:24px;background:#d3d3d3"></div>
<div class="r" style="left:37px;top:452px;width:2px;height:24px;background:#1e6b41"></div>
<div class="r" style="left:2px;top:351px;width:1886px;height:1px;background:#9f9f9f"></div>
<div class="r" style="left:38px;top:326px;width:1px;height:25px;background:#9f9f9f"></div>
<div class="r" style="left:212px;top:326px;width:1px;height:25px;background:#9f9f9f"></div>
<div class="r" style="left:411px;top:326px;width:1px;height:25px;background:#9f9f9f"></div>
<div class="r" style="left:1391px;top:326px;width:1px;height:25px;background:#9f9f9f"></div>
<div class="r" style="left:1514px;top:326px;width:1px;height:25px;background:#9f9f9f"></div>
<div class="r" style="left:1600px;top:326px;width:1px;height:25px;background:#9f9f9f"></div>
<div class="r" style="left:1686px;top:326px;width:1px;height:25px;background:#9f9f9f"></div>
<div class="r" style="left:1860px;top:326px;width:1px;height:25px;background:#9f9f9f"></div>
<div class="r" style="left:38px;top:351px;width:1px;height:646px;background:#9f9f9f"></div>
<div class="r" style="left:2px;top:376px;width:36px;height:1px;background:#c8c8c8"></div>
<div class="r" style="left:2px;top:401px;width:36px;height:1px;background:#c8c8c8"></div>
<div class="r" style="left:2px;top:426px;width:36px;height:1px;background:#c8c8c8"></div>
<div class="r" style="left:2px;top:451px;width:36px;height:1px;background:#c8c8c8"></div>
<div class="r" style="left:2px;top:476px;width:36px;height:1px;background:#c8c8c8"></div>
<div class="r" style="left:2px;top:501px;width:36px;height:1px;background:#c8c8c8"></div>
<div class="r" style="left:2px;top:526px;width:36px;height:1px;background:#c8c8c8"></div>
<div class="r" style="left:2px;top:551px;width:36px;height:1px;background:#c8c8c8"></div>
<div class="r" style="left:2px;top:576px;width:36px;height:1px;background:#c8c8c8"></div>
<div class="r" style="left:2px;top:601px;width:36px;height:1px;background:#c8c8c8"></div>
<div class="r" style="left:2px;top:626px;width:36px;height:1px;background:#c8c8c8"></div>
<div class="r" style="left:2px;top:651px;width:36px;height:1px;background:#c8c8c8"></div>
<div class="r" style="left:2px;top:676px;width:36px;height:1px;background:#c8c8c8"></div>
<div class="r" style="left:2px;top:701px;width:36px;height:1px;background:#c8c8c8"></div>
<div class="r" style="left:2px;top:726px;width:36px;height:1px;background:#c8c8c8"></div>
<div class="r" style="left:2px;top:751px;width:36px;height:1px;background:#c8c8c8"></div>
<div class="r" style="left:2px;top:776px;width:36px;height:1px;background:#c8c8c8"></div>
<div class="r" style="left:2px;top:801px;width:36px;height:1px;background:#c8c8c8"></div>
<div class="r" style="left:2px;top:826px;width:36px;height:1px;background:#c8c8c8"></div>
<div class="r" style="left:2px;top:851px;width:36px;height:1px;background:#c8c8c8"></div>
<div class="r" style="left:2px;top:876px;width:36px;height:1px;background:#c8c8c8"></div>
<div class="r" style="left:2px;top:901px;width:36px;height:1px;background:#c8c8c8"></div>
<div class="r" style="left:2px;top:926px;width:36px;height:1px;background:#c8c8c8"></div>
<div class="r" style="left:2px;top:951px;width:36px;height:1px;background:#c8c8c8"></div>
<div class="r" style="left:2px;top:976px;width:36px;height:1px;background:#c8c8c8"></div>
<svg class="r" style="left:0;top:320px" width="40" height="32"><polygon points="17.5,27.6 35,27.6 35,10.6" fill="#bdbdbd"/></svg>
<span style="left:38px;top:328px;width:174px;text-align:center;font-size:18px;line-height:24px;color:#262626">A</span>
<span style="left:212px;top:328px;width:199px;text-align:center;font-size:18px;line-height:24px;color:#262626">B</span>
<span style="left:411px;top:328px;width:980px;text-align:center;font-size:18px;line-height:24px;color:#262626">C</span>
<span style="left:1391px;top:328px;width:123px;text-align:center;font-size:18px;line-height:24px;color:#262626">D</span>
<span style="left:1514px;top:328px;width:86px;text-align:center;font-size:18px;line-height:24px;color:#262626">E</span>
<span style="left:1600px;top:328px;width:86px;text-align:center;font-size:18px;line-height:24px;color:#1e6b41">F</span>
<span style="left:1686px;top:328px;width:174px;text-align:center;font-size:18px;line-height:24px;color:#262626">G</span>
<span style="left:2px;top:354px;width:36px;text-align:center;font-size:18px;line-height:24px;color:#262626">1</span>
<span style="left:2px;top:379px;width:36px;text-align:center;font-size:18px;line-height:24px;color:#262626">2</span>
<span style="left:2px;top:404px;width:36px;text-align:center;font-size:18px;line-height:24px;color:#262626">3</span>
<span style="left:2px;top:429px;width:36px;text-align:center;font-size:18px;line-height:24px;color:#262626">4</span>
<span style="left:2px;top:454px;width:36px;text-align:center;font-size:18px;line-height:24px;color:#1e6b41">5</span>
<span style="left:2px;top:479px;width:36px;text-align:center;font-size:18px;line-height:24px;color:#262626">6</span>
<span style="left:2px;top:504px;width:36px;text-align:center;font-size:18px;line-height:24px;color:#262626">7</span>
<span style="left:2px;top:529px;width:36px;text-align:center;font-size:18px;line-height:24px;color:#262626">8</span>
<span style="left:2px;top:554px;width:36px;text-align:center;font-size:18px;line-height:24px;color:#262626">9</span>
<span style="left:2px;top:579px;width:36px;text-align:center;font-size:18px;line-height:24px;color:#262626">10</span>
<span style="left:2px;top:604px;width:36px;text-align:center;font-size:18px;line-height:24px;color:#262626">11</span>
<span style="left:2px;top:629px;width:36px;text-align:center;font-size:18px;line-height:24px;color:#262626">12</span>
<span style="left:2px;top:654px;width:36px;text-align:center;font-size:18px;line-height:24px;color:#262626">13</span>
<span style="left:2px;top:679px;width:36px;text-align:center;font-size:18px;line-height:24px;color:#262626">14</span>
<span style="left:2px;top:704px;width:36px;text-align:center;font-size:18px;line-height:24px;color:#262626">15</span>
<span style="left:2px;top:729px;width:36px;text-align:center;font-size:18px;line-height:24px;color:#262626">16</span>
<span style="left:2px;top:754px;width:36px;text-align:center;font-size:18px;line-height:24px;color:#262626">17</span>
<span style="left:2px;top:779px;width:36px;text-align:center;font-size:18px;line-height:24px;color:#262626">18</span>
<span style="left:2px;top:804px;width:36px;text-align:center;font-size:18px;line-height:24px;color:#262626">19</span>
<span style="left:2px;top:829px;width:36px;text-align:center;font-size:18px;line-height:24px;color:#262626">20</span>
<span style="left:2px;top:854px;width:36px;text-align:center;font-size:18px;line-height:24px;color:#262626">21</span>
<span style="left:2px;top:879px;width:36px;text-align:center;font-size:18px;line-height:24px;color:#262626">22</span>
<span style="left:2px;top:904px;width:36px;text-align:center;font-size:18px;line-height:24px;color:#262626">23</span>
<span style="left:2px;top:929px;width:36px;text-align:center;font-size:18px;line-height:24px;color:#262626">24</span>
<span style="left:2px;top:954px;width:36px;text-align:center;font-size:18px;line-height:24px;color:#262626">25</span>
<span style="left:2px;top:979px;width:36px;text-align:center;font-size:18px;line-height:24px;color:#262626">26</span>
<div class="r" style="left:2px;top:997px;width:1916px;height:48px;background:#f0f0f0"></div>
<div class="r" style="left:1888px;top:326px;width:30px;height:671px;background:#f0f0f0"></div>
<div class="r" style="left:1890px;top:327px;width:26px;height:669px;background:#f6f6f6;border-radius:13px"></div>
<svg class="r" style="left:1895px;top:333px" width="16" height="12" viewBox="0 0 16 12"><path d="M8 1.5 L14.5 10.5 H1.5 Z" fill="#727272" stroke="#727272" stroke-width="1.5" stroke-linejoin="round"/></svg>
<div class="r" style="left:1897px;top:352px;width:12px;height:26px;background:#727272;border-radius:6px"></div>
<svg class="r" style="left:1895px;top:981px" width="16" height="12" viewBox="0 0 16 12"><path d="M8 10.5 L14.5 1.5 H1.5 Z" fill="#727272" stroke="#727272" stroke-width="1.5" stroke-linejoin="round"/></svg>
<svg class="r" style="left:36px;top:1012px" width="12" height="16" viewBox="0 0 12 16" fill="none" stroke="#9a9a9a" stroke-width="1.6"><path d="M10 1 L2.5 8 L10 15"/></svg>
<svg class="r" style="left:84px;top:1012px" width="12" height="16" viewBox="0 0 12 16" fill="none" stroke="#9a9a9a" stroke-width="1.6"><path d="M2 1 L9.5 8 L2 15"/></svg>
<div class="r" style="left:168px;top:997px;width:48px;height:42px;background:#fff;border-radius:0 0 6px 6px;box-shadow:0 1px 1px rgba(0,0,0,0.12)"></div>
<span style="left:179.26px;top:1008.00px;font-size:20px;line-height:20px;font-weight:normal;font-style:normal;color:#262626;font-family:'Liberation Sans', sans-serif;transform:scaleX(1.0541);">LV</span>
<div class="r" style="left:179.5px;top:1031.5px;width:25px;height:3px;background:#107c41;border-radius:1px"></div>
<div class="r" style="left:222px;top:1008px;width:1px;height:26px;background:#c8c8c8"></div>
<span style="left:242.65px;top:1013.00px;font-size:20px;line-height:20px;font-weight:normal;font-style:normal;color:#262626;font-family:'Liberation Sans', sans-serif;transform:scaleX(1.0582);">Summenblatt</span>
<div class="r" style="left:388px;top:1008px;width:1px;height:26px;background:#c8c8c8"></div>
<svg class="r" style="left:451px;top:1012px" width="19" height="17" viewBox="0 0 19 17" fill="none" stroke="#262626" stroke-width="1.6"><path d="M9.5 1 V16 M1.5 8.5 H17.5"/></svg>
<svg class="r" style="left:1152px;top:1013px" width="9" height="17" viewBox="0 0 9 17" fill="#262626"><rect x="2.5" y="0.5" width="3" height="3"/><rect x="2.5" y="7" width="3" height="3"/><rect x="2.5" y="13.5" width="3" height="3"/></svg>
<div class="r" style="left:1181px;top:1006px;width:708px;height:28px;background:#f6f6f6;border-radius:14px"></div>
<svg class="r" style="left:1188px;top:1012px" width="13" height="16" viewBox="0 0 13 16"><path d="M2 8 L11 1.5 V14.5 Z" fill="#727272" stroke="#727272" stroke-width="1.5" stroke-linejoin="round"/></svg>
<div class="r" style="left:1206px;top:1013.5px;width:389px;height:13px;background:#727272;border-radius:6.5px"></div>
<svg class="r" style="left:1871px;top:1012px" width="13" height="16" viewBox="0 0 13 16"><path d="M11 8 L2 1.5 V14.5 Z" fill="#727272" stroke="#727272" stroke-width="1.5" stroke-linejoin="round"/></svg>
<div class="r" style="left:2px;top:1045px;width:1916px;height:1px;background:#d6d4d0"></div>
<div class="r" style="left:2px;top:1046px;width:1916px;height:32px;background:#f3f3f3"></div>
<span style="left:17.02px;top:1055.00px;font-size:17px;line-height:17px;font-weight:normal;font-style:normal;color:#333;font-family:'Liberation Sans', sans-serif;transform:scaleX(0.9141);">Bereit</span>
<svg class="r" style="left:86px;top:1052px" width="24" height="21" viewBox="0 0 24 21" fill="none" stroke="#262626" stroke-width="1.4">
<path d="M11 18.5 H1 V1 H21 V8"/><path d="M1 5 H21"/><path d="M4 9 H9 M4 12 H8 M4 15 H8"/><circle cx="16" cy="14" r="6"/><circle cx="16" cy="14" r="2.8" fill="#262626"/></svg>
<svg class="r" style="left:132px;top:1051px" width="25" height="22" viewBox="0 0 25 22" fill="none" stroke="#262626" stroke-width="1.4">
<circle cx="10" cy="3" r="2.2"/><path d="M1.5 6.5 C5 8 15 8 18.5 6.5"/><path d="M10 8 V13 L6 20 M10 13 L13 17"/><path d="M13 17 L16 20.5 L23.5 12"/></svg>
<span style="left:159.22px;top:1055.00px;font-size:17px;line-height:17px;font-weight:normal;font-style:normal;color:#333;font-family:'Liberation Sans', sans-serif;transform:scaleX(0.9110);">Barrierefreiheit: Keine Probleme</span>
<div class="r" style="left:1452px;top:1046px;width:60px;height:32px;background:#dcdcdc"></div>
<svg class="r" style="left:1470px;top:1051px" width="23" height="21" viewBox="0 0 23 21" fill="none" stroke="#262626" stroke-width="1.4">
<rect x="1" y="1" width="20" height="18.5"/><path d="M1 7.2 H21 M1 13.4 H21 M7.7 1 V19.5 M14.3 1 V19.5"/></svg>
<svg class="r" style="left:1530px;top:1051px" width="23" height="21" viewBox="0 0 23 21" fill="none" stroke="#262626" stroke-width="1.4">
<rect x="1" y="1" width="20.5" height="18.5"/><rect x="5" y="4.5" width="12.5" height="11.5"/><path d="M7.5 8 H15 M7.5 10.5 H15 M7.5 13 H15"/></svg>
<svg class="r" style="left:1590px;top:1051px" width="23" height="21" viewBox="0 0 23 21" fill="none" stroke="#262626" stroke-width="1.4">
<path d="M1 19.5 V1 H21.5 V19.5"/><path d="M1 19.5 H21.5" stroke-dasharray="2 2"/><path d="M8 1 V10 H14 V1"/></svg>
<div class="r" style="left:1639.5px;top:1061px;width:11.5px;height:1.4px;background:#262626"></div>
<div class="r" style="left:1660px;top:1061px;width:148px;height:1.4px;background:#262626"></div>
<div class="r" style="left:1722.5px;top:1053.5px;width:8px;height:16px;background:#262626;border-radius:1px"></div>
<div class="r" style="left:1733.5px;top:1057px;width:1.2px;height:9px;background:#262626"></div>
<svg class="r" style="left:1815px;top:1055px" width="13" height="13" viewBox="0 0 13 13" fill="none" stroke="#262626" stroke-width="1.4"><path d="M6.5 0.5 V12.5 M0.5 6.5 H12.5"/></svg>
<span style="left:1845.44px;top:1054.00px;font-size:17px;line-height:17px;font-weight:normal;font-style:normal;color:#333;font-family:'Liberation Sans', sans-serif;transform:scaleX(0.9422);">90 %</span>
</div></body></html>
